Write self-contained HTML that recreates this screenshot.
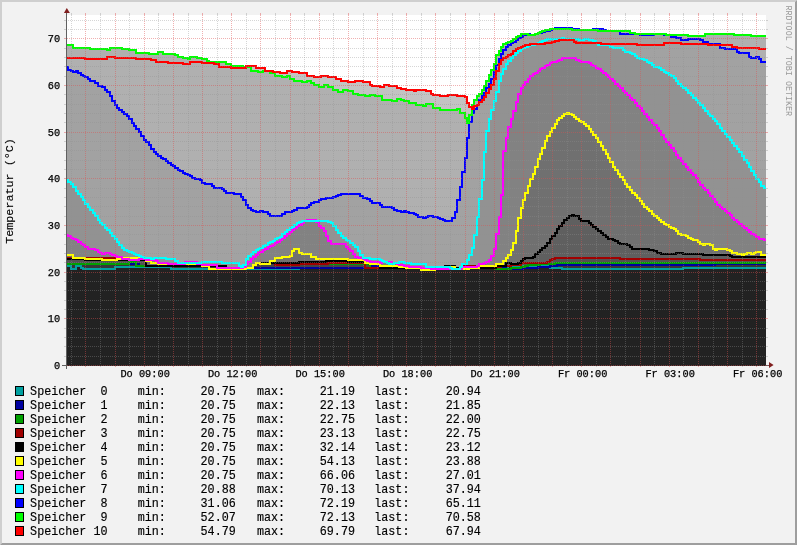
<!DOCTYPE html>
<html><head><meta charset="utf-8"><title>RRDtool graph</title><style>html,body{margin:0;padding:0;background:#F2F2F2;overflow:hidden}svg{display:block;will-change:transform}</style></head><body><svg width="797" height="545" viewBox="0 0 797 545">
<rect x="0" y="0" width="797" height="545" fill="#F2F2F2"/>
<polygon points="0,0 797,0 795,2 2,2 2,543 0,545" fill="#CFCFCF"/>
<polygon points="797,0 797,545 0,545 2,543 795,543 795,2" fill="#9E9E9E"/>
<rect x="66" y="15" width="700" height="350" fill="#FFFFFF"/>
<polygon points="66,365 66,58 85,58 85,59 107,59 107,57 115,57 115,58 136,58 136,59 151,59 151,60 156,60 156,62 168,62 168,63 183,63 183,64 190,64 190,62 202,62 202,63 214,63 214,64 219,64 219,67 231,67 231,68 246,68 246,66 256,66 256,68 265,68 265,71 273,71 273,72 280,72 280,73 287,73 287,71 292,71 292,72 299,72 299,73 307,73 307,76 314,76 314,77 321,77 321,76 328,76 328,77 336,77 336,79 341,79 341,81 348,81 348,82 355,82 355,81 363,81 363,82 370,82 370,85 372,85 372,86 380,86 380,87 384,87 384,85 389,85 389,86 397,86 397,88 401,88 401,89 406,89 406,90 414,90 414,91 416,91 416,90 426,90 426,91 431,91 431,94 433,94 433,95 440,95 440,96 448,96 448,95 457,95 457,96 465,96 465,97 467,97 467,103 469,103 469,107 472,107 472,109 474,109 474,106 477,106 477,105 479,105 479,102 482,102 482,100 484,100 484,97 486,97 486,93 489,93 489,89 491,89 491,85 494,85 494,79 496,79 496,71 499,71 499,64 501,64 501,60 503,60 503,58 506,58 506,57 508,57 508,55 511,55 511,54 513,54 513,51 516,51 516,49 518,49 518,48 521,48 521,47 523,47 523,46 525,46 525,45 530,45 530,44 545,44 545,43 552,43 552,42 555,42 555,41 559,41 559,40 574,40 574,42 576,42 576,43 601,43 601,44 637,44 637,45 664,45 664,43 681,43 681,44 708,44 708,45 732,45 732,47 737,47 737,48 759,48 759,49 766,49 766,365" fill="#C3C3C3"/>
<polygon points="66,365 66,45 73,45 73,48 90,48 90,49 107,49 107,50 110,50 110,48 122,48 122,49 129,49 129,50 136,50 136,53 149,53 149,54 158,54 158,52 163,52 163,54 175,54 175,55 178,55 178,57 183,57 183,58 188,58 188,59 190,59 190,57 197,57 197,58 202,58 202,59 207,59 207,61 209,61 209,62 217,62 217,63 219,63 219,62 226,62 226,64 231,64 231,66 243,66 243,67 251,67 251,71 258,71 258,72 263,72 263,71 270,71 270,73 275,73 275,76 282,76 282,77 287,77 287,76 290,76 290,79 294,79 294,81 302,81 302,82 307,82 307,81 311,81 311,83 314,83 314,85 319,85 319,87 324,87 324,85 328,85 328,87 333,87 333,90 338,90 338,92 343,92 343,90 348,90 348,91 353,91 353,94 358,94 358,95 365,95 365,96 370,96 370,95 375,95 375,96 382,96 382,100 392,100 392,101 397,101 397,99 401,99 401,100 404,100 404,101 409,101 409,103 416,103 416,105 423,105 423,106 426,106 426,104 433,104 433,108 440,108 440,110 457,110 457,109 460,109 460,113 465,113 465,118 467,118 467,123 469,123 469,115 472,115 472,105 474,105 474,100 477,100 477,96 479,96 479,94 482,94 482,90 484,90 484,86 486,86 486,81 489,81 489,75 491,75 491,70 494,70 494,64 496,64 496,55 499,55 499,51 501,51 501,47 503,47 503,44 506,44 506,43 508,43 508,42 511,42 511,41 513,41 513,39 516,39 516,37 518,37 518,36 521,36 521,34 528,34 528,35 535,35 535,34 538,34 538,33 540,33 540,32 542,32 542,31 545,31 545,30 550,30 550,29 572,29 572,30 598,30 598,31 630,31 630,33 635,33 635,34 666,34 666,35 688,35 688,36 705,36 705,34 734,34 734,35 751,35 751,36 766,36 766,365" fill="#B0B0B0"/>
<polygon points="66,365 66,67 68,67 68,70 71,70 71,71 73,71 73,72 76,72 76,71 78,71 78,73 81,73 81,75 83,75 83,76 85,76 85,77 88,77 88,79 90,79 90,81 95,81 95,83 98,83 98,86 102,86 102,87 105,87 105,90 107,90 107,92 110,92 110,96 112,96 112,101 115,101 115,105 117,105 117,108 119,108 119,110 122,110 122,112 124,112 124,114 127,114 127,116 129,116 129,119 132,119 132,123 134,123 134,126 136,126 136,129 139,129 139,132 141,132 141,136 144,136 144,140 146,140 146,142 149,142 149,145 151,145 151,149 154,149 154,152 156,152 156,154 158,154 158,156 161,156 161,158 163,158 163,159 166,159 166,161 168,161 168,163 171,163 171,165 173,165 173,166 175,166 175,168 178,168 178,170 180,170 180,171 183,171 183,173 185,173 185,174 188,174 188,175 190,175 190,176 192,176 192,178 195,178 195,179 200,179 200,180 202,180 202,183 205,183 205,184 212,184 212,186 214,186 214,188 222,188 222,189 224,189 224,191 226,191 226,193 234,193 234,194 241,194 241,197 243,197 243,200 246,200 246,205 248,205 248,208 251,208 251,210 253,210 253,211 256,211 256,212 260,212 260,211 263,211 263,212 268,212 268,214 270,214 270,216 282,216 282,214 285,214 285,212 292,212 292,211 294,211 294,210 297,210 297,208 307,208 307,207 309,207 309,205 311,205 311,203 314,203 314,202 319,202 319,200 321,200 321,199 326,199 326,198 333,198 333,197 336,197 336,196 338,196 338,195 341,195 341,194 360,194 360,196 363,196 363,198 367,198 367,199 370,199 370,201 372,201 372,203 380,203 380,205 382,205 382,207 392,207 392,208 394,208 394,210 397,210 397,211 401,211 401,212 404,212 404,211 406,211 406,212 409,212 409,213 414,213 414,214 416,214 416,215 418,215 418,217 423,217 423,218 426,218 426,217 428,217 428,216 433,216 433,217 438,217 438,218 440,218 440,219 443,219 443,220 445,220 445,221 452,221 452,218 455,218 455,212 457,212 457,200 460,200 460,187 462,187 462,172 465,172 465,158 467,158 467,138 469,138 469,122 472,122 472,113 474,113 474,109 477,109 477,105 479,105 479,100 482,100 482,96 484,96 484,93 486,93 486,88 489,88 489,84 491,84 491,79 494,79 494,72 496,72 496,65 499,65 499,59 501,59 501,54 503,54 503,50 506,50 506,47 508,47 508,45 511,45 511,43 513,43 513,42 516,42 516,40 518,40 518,38 521,38 521,37 523,37 523,35 528,35 528,34 530,34 530,35 535,35 535,34 538,34 538,33 542,33 542,32 545,32 545,31 550,31 550,30 552,30 552,29 555,29 555,28 572,28 572,29 579,29 579,30 593,30 593,29 603,29 603,30 606,30 606,31 620,31 620,34 640,34 640,35 654,35 654,34 664,34 664,35 671,35 671,37 676,37 676,38 681,38 681,40 688,40 688,39 700,39 700,40 703,40 703,42 708,42 708,44 720,44 720,48 725,48 725,49 737,49 737,52 739,52 739,53 749,53 749,57 751,57 751,58 756,58 756,57 759,57 759,59 761,59 761,62 766,62 766,365" fill="#A2A2A2"/>
<polygon points="66,365 66,180 68,180 68,182 71,182 71,184 73,184 73,187 76,187 76,191 78,191 78,194 81,194 81,197 83,197 83,200 85,200 85,204 88,204 88,207 90,207 90,210 93,210 93,213 95,213 95,216 98,216 98,220 100,220 100,223 102,223 102,225 105,225 105,228 107,228 107,230 110,230 110,233 112,233 112,236 115,236 115,239 117,239 117,242 119,242 119,245 122,245 122,248 124,248 124,250 127,250 127,251 129,251 129,252 132,252 132,253 134,253 134,254 136,254 136,255 139,255 139,256 141,256 141,257 144,257 144,258 151,258 151,259 154,259 154,258 166,258 166,259 175,259 175,261 178,261 178,263 202,263 202,262 222,262 222,263 239,263 239,266 241,266 241,267 243,267 243,265 246,265 246,259 248,259 248,256 251,256 251,254 253,254 253,252 256,252 256,250 258,250 258,249 260,249 260,248 263,248 263,246 265,246 265,245 268,245 268,243 270,243 270,242 273,242 273,241 275,241 275,239 277,239 277,238 280,238 280,237 282,237 282,234 285,234 285,232 287,232 287,230 290,230 290,228 292,228 292,227 294,227 294,225 297,225 297,223 299,223 299,222 302,222 302,221 328,221 328,222 331,222 331,223 333,223 333,226 336,226 336,230 338,230 338,233 341,233 341,236 343,236 343,238 346,238 346,240 348,240 348,241 350,241 350,243 353,243 353,245 355,245 355,247 358,247 358,251 360,251 360,255 363,255 363,258 370,258 370,259 380,259 380,260 382,260 382,261 384,261 384,262 387,262 387,263 389,263 389,264 394,264 394,263 399,263 399,262 404,262 404,263 411,263 411,264 426,264 426,267 450,267 450,268 452,268 452,269 460,269 460,267 462,267 462,264 467,264 467,260 469,260 469,255 472,255 472,248 474,248 474,235 477,235 477,217 479,217 479,199 482,199 482,180 484,180 484,152 486,152 486,131 489,131 489,119 491,119 491,110 494,110 494,101 496,101 496,92 499,92 499,81 501,81 501,74 503,74 503,69 506,69 506,64 508,64 508,61 511,61 511,58 513,58 513,55 516,55 516,53 518,53 518,51 521,51 521,49 523,49 523,48 525,48 525,47 528,47 528,46 530,46 530,45 535,45 535,44 538,44 538,43 540,43 540,42 542,42 542,41 545,41 545,40 547,40 547,39 562,39 562,38 564,38 564,39 579,39 579,40 584,40 584,39 589,39 589,40 593,40 593,41 596,41 596,43 598,43 598,45 610,45 610,47 613,47 613,48 623,48 623,50 625,50 625,52 630,52 630,53 632,53 632,54 635,54 635,56 637,56 637,58 640,58 640,59 644,59 644,60 647,60 647,62 649,62 649,63 652,63 652,65 654,65 654,67 659,67 659,68 661,68 661,70 664,70 664,72 666,72 666,73 669,73 669,75 671,75 671,76 674,76 674,78 676,78 676,81 678,81 678,84 681,84 681,86 683,86 683,88 686,88 686,90 688,90 688,93 691,93 691,95 693,95 693,98 696,98 696,100 698,100 698,103 700,103 700,105 703,105 703,108 705,108 705,111 708,111 708,114 710,114 710,116 713,116 713,119 715,119 715,121 717,121 717,124 720,124 720,128 722,128 722,131 725,131 725,134 727,134 727,137 730,137 730,140 732,140 732,143 734,143 734,146 737,146 737,149 739,149 739,152 742,152 742,156 744,156 744,160 747,160 747,163 749,163 749,167 751,167 751,171 754,171 754,175 756,175 756,179 759,179 759,182 761,182 761,186 764,186 764,188 766,188 766,365" fill="#929292"/>
<polygon points="66,365 66,235 68,235 68,236 71,236 71,238 73,238 73,239 76,239 76,240 78,240 78,242 81,242 81,244 83,244 83,245 85,245 85,247 88,247 88,249 95,249 95,250 98,250 98,252 100,252 100,253 102,253 102,254 105,254 105,253 110,253 110,254 112,254 112,255 115,255 115,256 117,256 117,257 122,257 122,259 129,259 129,260 139,260 139,259 146,259 146,260 156,260 156,261 158,261 158,263 168,263 168,264 185,264 185,262 197,262 197,264 202,264 202,265 217,265 217,268 243,268 243,267 246,267 246,264 248,264 248,262 251,262 251,259 253,259 253,257 256,257 256,255 258,255 258,253 260,253 260,252 263,252 263,250 265,250 265,249 268,249 268,247 270,247 270,246 273,246 273,245 275,245 275,243 277,243 277,242 280,242 280,240 282,240 282,238 285,238 285,236 287,236 287,234 290,234 290,232 292,232 292,230 294,230 294,228 297,228 297,226 299,226 299,225 302,225 302,223 304,223 304,221 307,221 307,220 316,220 316,222 319,222 319,226 321,226 321,228 324,228 324,231 326,231 326,236 328,236 328,241 331,241 331,244 346,244 346,247 348,247 348,249 350,249 350,251 353,251 353,254 355,254 355,257 358,257 358,258 363,258 363,259 365,259 365,260 367,260 367,261 370,261 370,262 380,262 380,263 382,263 382,262 392,262 392,263 397,263 397,264 399,264 399,265 404,265 404,266 409,266 409,267 421,267 421,268 431,268 431,269 462,269 462,267 477,267 477,266 479,266 479,264 484,264 484,263 486,263 486,262 489,262 489,260 491,260 491,256 494,256 494,249 496,249 496,234 499,234 499,217 501,217 501,195 503,195 503,151 506,151 506,138 508,138 508,127 511,127 511,119 513,119 513,111 516,111 516,102 518,102 518,94 521,94 521,88 523,88 523,85 525,85 525,82 528,82 528,79 530,79 530,76 533,76 533,74 535,74 535,73 538,73 538,71 540,71 540,69 542,69 542,68 545,68 545,66 547,66 547,65 550,65 550,63 552,63 552,62 557,62 557,61 559,61 559,60 562,60 562,58 576,58 576,60 579,60 579,61 581,61 581,62 589,62 589,63 591,63 591,65 593,65 593,66 596,66 596,68 598,68 598,69 601,69 601,71 603,71 603,73 606,73 606,75 608,75 608,77 610,77 610,79 613,79 613,81 615,81 615,84 618,84 618,86 620,86 620,88 623,88 623,91 625,91 625,93 627,93 627,95 630,95 630,98 632,98 632,100 635,100 635,103 637,103 637,106 640,106 640,108 642,108 642,111 644,111 644,114 647,114 647,117 649,117 649,120 652,120 652,123 654,123 654,125 657,125 657,128 659,128 659,131 661,131 661,135 664,135 664,139 666,139 666,142 669,142 669,145 671,145 671,148 674,148 674,151 676,151 676,155 678,155 678,158 681,158 681,161 683,161 683,164 686,164 686,167 688,167 688,170 691,170 691,173 693,173 693,175 696,175 696,178 698,178 698,182 700,182 700,185 703,185 703,188 705,188 705,190 708,190 708,193 710,193 710,196 713,196 713,199 715,199 715,202 717,202 717,205 720,205 720,207 722,207 722,209 725,209 725,211 727,211 727,213 730,213 730,215 732,215 732,218 734,218 734,220 737,220 737,222 739,222 739,224 742,224 742,226 744,226 744,228 747,228 747,230 749,230 749,232 751,232 751,234 754,234 754,235 756,235 756,237 759,237 759,239 764,239 764,240 766,240 766,365" fill="#828282"/>
<polygon points="66,365 66,255 73,255 73,258 85,258 85,259 102,259 102,260 117,260 117,259 122,259 122,258 139,258 139,259 146,259 146,261 151,261 151,263 158,263 158,264 202,264 202,266 209,266 209,269 246,269 246,268 253,268 253,265 256,265 256,263 260,263 260,264 270,264 270,261 275,261 275,258 282,258 282,257 290,257 290,256 292,256 292,251 294,251 294,249 299,249 299,253 302,253 302,254 311,254 311,257 316,257 316,259 348,259 348,260 365,260 365,263 370,263 370,264 380,264 380,266 399,266 399,267 406,267 406,268 421,268 421,270 435,270 435,269 438,269 438,267 455,267 455,269 469,269 469,268 479,268 479,266 496,266 496,264 503,264 503,261 506,261 506,258 508,258 508,255 511,255 511,250 513,250 513,243 516,243 516,231 518,231 518,218 521,218 521,208 523,208 523,200 525,200 525,193 528,193 528,186 530,186 530,179 533,179 533,174 535,174 535,167 538,167 538,159 540,159 540,154 542,154 542,148 545,148 545,141 547,141 547,136 550,136 550,132 552,132 552,128 555,128 555,124 557,124 557,120 559,120 559,118 562,118 562,116 564,116 564,114 567,114 567,113 569,113 569,114 572,114 572,115 574,115 574,117 576,117 576,119 579,119 579,121 581,121 581,122 584,122 584,124 586,124 586,126 589,126 589,129 591,129 591,132 593,132 593,135 596,135 596,138 598,138 598,142 601,142 601,146 603,146 603,150 606,150 606,154 608,154 608,158 610,158 610,162 613,162 613,167 615,167 615,170 618,170 618,174 620,174 620,177 623,177 623,180 625,180 625,184 627,184 627,187 630,187 630,190 632,190 632,193 635,193 635,195 637,195 637,198 640,198 640,201 642,201 642,204 644,204 644,207 647,207 647,209 649,209 649,211 652,211 652,214 654,214 654,216 657,216 657,218 659,218 659,220 661,220 661,222 664,222 664,224 666,224 666,225 669,225 669,227 671,227 671,228 674,228 674,229 676,229 676,231 678,231 678,234 681,234 681,235 686,235 686,236 688,236 688,238 691,238 691,239 693,239 693,240 698,240 698,242 700,242 700,244 703,244 703,245 705,245 705,244 710,244 710,245 713,245 713,249 715,249 715,250 717,250 717,249 727,249 727,250 730,250 730,251 732,251 732,253 737,253 737,254 742,254 742,255 744,255 744,254 747,254 747,253 751,253 751,254 754,254 754,253 756,253 756,252 761,252 761,255 766,255 766,365" fill="#707070"/>
<polygon points="66,365 66,259 85,259 85,260 146,260 146,266 226,266 226,269 246,269 246,268 253,268 253,265 256,265 256,263 299,263 299,262 326,262 326,261 348,261 348,262 380,262 380,268 445,268 445,266 455,266 455,268 496,268 496,266 506,266 506,263 511,263 511,264 518,264 518,263 521,263 521,261 523,261 523,259 525,259 525,258 533,258 533,257 535,257 535,254 538,254 538,252 540,252 540,250 542,250 542,248 545,248 545,246 547,246 547,243 550,243 550,239 552,239 552,236 555,236 555,233 557,233 557,229 559,229 559,226 562,226 562,223 564,223 564,220 567,220 567,218 569,218 569,216 572,216 572,215 574,215 574,216 579,216 579,219 581,219 581,221 589,221 589,223 591,223 591,225 593,225 593,227 596,227 596,229 598,229 598,231 601,231 601,233 603,233 603,235 606,235 606,237 608,237 608,239 613,239 613,240 615,240 615,241 618,241 618,243 620,243 620,244 627,244 627,245 630,245 630,247 632,247 632,249 649,249 649,250 654,250 654,251 657,251 657,253 661,253 661,254 676,254 676,253 683,253 683,254 703,254 703,255 730,255 730,256 732,256 732,257 766,257 766,365" fill="#5F5F5F"/>
<polygon points="66,365 66,258 146,258 146,266 226,266 226,269 246,269 246,268 253,268 253,265 256,265 256,263 275,263 275,265 299,265 299,264 328,264 328,263 365,263 365,268 462,268 462,266 479,266 479,268 489,268 489,267 501,267 501,266 511,266 511,265 521,265 521,263 547,263 547,262 550,262 550,260 552,260 552,259 555,259 555,258 620,258 620,259 700,259 700,260 766,260 766,365" fill="#525252"/>
<polygon points="66,365 66,264 129,264 129,262 136,262 136,266 226,266 226,269 246,269 246,268 253,268 253,265 256,265 256,263 299,263 299,264 370,264 370,268 496,268 496,269 511,269 511,268 521,268 521,267 525,267 525,266 528,266 528,265 540,265 540,264 555,264 555,263 766,263 766,365" fill="#444444"/>
<polygon points="66,365 66,264 139,264 139,266 226,266 226,268 370,268 370,267 372,267 372,266 380,266 380,268 506,268 506,269 523,269 523,268 538,268 538,267 550,267 550,266 557,266 557,265 715,265 715,264 766,264 766,365" fill="#363636"/>
<polygon points="66,365 66,266 71,266 71,269 76,269 76,266 81,266 81,268 83,268 83,269 115,269 115,267 171,267 171,269 299,269 299,268 501,268 501,269 508,269 508,266 550,266 550,268 562,268 562,269 683,269 683,268 766,268 766,365" fill="#222222"/>
<polyline points="66,266 71,266 71,269 76,269 76,266 81,266 81,268 83,268 83,269 115,269 115,267 171,267 171,269 299,269 299,268 501,268 501,269 508,269 508,266 550,266 550,268 562,268 562,269 683,269 683,268 766,268" fill="none" stroke="#00A0A0" stroke-width="2" stroke-linejoin="miter" stroke-miterlimit="4" shape-rendering="crispEdges"/>
<polyline points="66,264 139,264 139,266 226,266 226,268 370,268 370,267 372,267 372,266 380,266 380,268 506,268 506,269 523,269 523,268 538,268 538,267 550,267 550,266 557,266 557,265 715,265 715,264 766,264" fill="none" stroke="#0000A0" stroke-width="2" stroke-linejoin="miter" stroke-miterlimit="4" shape-rendering="crispEdges"/>
<polyline points="66,264 129,264 129,262 136,262 136,266 226,266 226,269 246,269 246,268 253,268 253,265 256,265 256,263 299,263 299,264 370,264 370,268 496,268 496,269 511,269 511,268 521,268 521,267 525,267 525,266 528,266 528,265 540,265 540,264 555,264 555,263 766,263" fill="none" stroke="#00A000" stroke-width="2" stroke-linejoin="miter" stroke-miterlimit="4" shape-rendering="crispEdges"/>
<polyline points="66,258 146,258 146,266 226,266 226,269 246,269 246,268 253,268 253,265 256,265 256,263 275,263 275,265 299,265 299,264 328,264 328,263 365,263 365,268 462,268 462,266 479,266 479,268 489,268 489,267 501,267 501,266 511,266 511,265 521,265 521,263 547,263 547,262 550,262 550,260 552,260 552,259 555,259 555,258 620,258 620,259 700,259 700,260 766,260" fill="none" stroke="#A00000" stroke-width="2" stroke-linejoin="miter" stroke-miterlimit="4" shape-rendering="crispEdges"/>
<polyline points="66,259 85,259 85,260 146,260 146,266 226,266 226,269 246,269 246,268 253,268 253,265 256,265 256,263 299,263 299,262 326,262 326,261 348,261 348,262 380,262 380,268 445,268 445,266 455,266 455,268 496,268 496,266 506,266 506,263 511,263 511,264 518,264 518,263 521,263 521,261 523,261 523,259 525,259 525,258 533,258 533,257 535,257 535,254 538,254 538,252 540,252 540,250 542,250 542,248 545,248 545,246 547,246 547,243 550,243 550,239 552,239 552,236 555,236 555,233 557,233 557,229 559,229 559,226 562,226 562,223 564,223 564,220 567,220 567,218 569,218 569,216 572,216 572,215 574,215 574,216 579,216 579,219 581,219 581,221 589,221 589,223 591,223 591,225 593,225 593,227 596,227 596,229 598,229 598,231 601,231 601,233 603,233 603,235 606,235 606,237 608,237 608,239 613,239 613,240 615,240 615,241 618,241 618,243 620,243 620,244 627,244 627,245 630,245 630,247 632,247 632,249 649,249 649,250 654,250 654,251 657,251 657,253 661,253 661,254 676,254 676,253 683,253 683,254 703,254 703,255 730,255 730,256 732,256 732,257 766,257" fill="none" stroke="#000000" stroke-width="2" stroke-linejoin="miter" stroke-miterlimit="4" shape-rendering="crispEdges"/>
<polyline points="66,255 73,255 73,258 85,258 85,259 102,259 102,260 117,260 117,259 122,259 122,258 139,258 139,259 146,259 146,261 151,261 151,263 158,263 158,264 202,264 202,266 209,266 209,269 246,269 246,268 253,268 253,265 256,265 256,263 260,263 260,264 270,264 270,261 275,261 275,258 282,258 282,257 290,257 290,256 292,256 292,251 294,251 294,249 299,249 299,253 302,253 302,254 311,254 311,257 316,257 316,259 348,259 348,260 365,260 365,263 370,263 370,264 380,264 380,266 399,266 399,267 406,267 406,268 421,268 421,270 435,270 435,269 438,269 438,267 455,267 455,269 469,269 469,268 479,268 479,266 496,266 496,264 503,264 503,261 506,261 506,258 508,258 508,255 511,255 511,250 513,250 513,243 516,243 516,231 518,231 518,218 521,218 521,208 523,208 523,200 525,200 525,193 528,193 528,186 530,186 530,179 533,179 533,174 535,174 535,167 538,167 538,159 540,159 540,154 542,154 542,148 545,148 545,141 547,141 547,136 550,136 550,132 552,132 552,128 555,128 555,124 557,124 557,120 559,120 559,118 562,118 562,116 564,116 564,114 567,114 567,113 569,113 569,114 572,114 572,115 574,115 574,117 576,117 576,119 579,119 579,121 581,121 581,122 584,122 584,124 586,124 586,126 589,126 589,129 591,129 591,132 593,132 593,135 596,135 596,138 598,138 598,142 601,142 601,146 603,146 603,150 606,150 606,154 608,154 608,158 610,158 610,162 613,162 613,167 615,167 615,170 618,170 618,174 620,174 620,177 623,177 623,180 625,180 625,184 627,184 627,187 630,187 630,190 632,190 632,193 635,193 635,195 637,195 637,198 640,198 640,201 642,201 642,204 644,204 644,207 647,207 647,209 649,209 649,211 652,211 652,214 654,214 654,216 657,216 657,218 659,218 659,220 661,220 661,222 664,222 664,224 666,224 666,225 669,225 669,227 671,227 671,228 674,228 674,229 676,229 676,231 678,231 678,234 681,234 681,235 686,235 686,236 688,236 688,238 691,238 691,239 693,239 693,240 698,240 698,242 700,242 700,244 703,244 703,245 705,245 705,244 710,244 710,245 713,245 713,249 715,249 715,250 717,250 717,249 727,249 727,250 730,250 730,251 732,251 732,253 737,253 737,254 742,254 742,255 744,255 744,254 747,254 747,253 751,253 751,254 754,254 754,253 756,253 756,252 761,252 761,255 766,255" fill="none" stroke="#FFFF00" stroke-width="2" stroke-linejoin="miter" stroke-miterlimit="4" shape-rendering="crispEdges"/>
<polyline points="66,235 68,235 68,236 71,236 71,238 73,238 73,239 76,239 76,240 78,240 78,242 81,242 81,244 83,244 83,245 85,245 85,247 88,247 88,249 95,249 95,250 98,250 98,252 100,252 100,253 102,253 102,254 105,254 105,253 110,253 110,254 112,254 112,255 115,255 115,256 117,256 117,257 122,257 122,259 129,259 129,260 139,260 139,259 146,259 146,260 156,260 156,261 158,261 158,263 168,263 168,264 185,264 185,262 197,262 197,264 202,264 202,265 217,265 217,268 243,268 243,267 246,267 246,264 248,264 248,262 251,262 251,259 253,259 253,257 256,257 256,255 258,255 258,253 260,253 260,252 263,252 263,250 265,250 265,249 268,249 268,247 270,247 270,246 273,246 273,245 275,245 275,243 277,243 277,242 280,242 280,240 282,240 282,238 285,238 285,236 287,236 287,234 290,234 290,232 292,232 292,230 294,230 294,228 297,228 297,226 299,226 299,225 302,225 302,223 304,223 304,221 307,221 307,220 316,220 316,222 319,222 319,226 321,226 321,228 324,228 324,231 326,231 326,236 328,236 328,241 331,241 331,244 346,244 346,247 348,247 348,249 350,249 350,251 353,251 353,254 355,254 355,257 358,257 358,258 363,258 363,259 365,259 365,260 367,260 367,261 370,261 370,262 380,262 380,263 382,263 382,262 392,262 392,263 397,263 397,264 399,264 399,265 404,265 404,266 409,266 409,267 421,267 421,268 431,268 431,269 462,269 462,267 477,267 477,266 479,266 479,264 484,264 484,263 486,263 486,262 489,262 489,260 491,260 491,256 494,256 494,249 496,249 496,234 499,234 499,217 501,217 501,195 503,195 503,151 506,151 506,138 508,138 508,127 511,127 511,119 513,119 513,111 516,111 516,102 518,102 518,94 521,94 521,88 523,88 523,85 525,85 525,82 528,82 528,79 530,79 530,76 533,76 533,74 535,74 535,73 538,73 538,71 540,71 540,69 542,69 542,68 545,68 545,66 547,66 547,65 550,65 550,63 552,63 552,62 557,62 557,61 559,61 559,60 562,60 562,58 576,58 576,60 579,60 579,61 581,61 581,62 589,62 589,63 591,63 591,65 593,65 593,66 596,66 596,68 598,68 598,69 601,69 601,71 603,71 603,73 606,73 606,75 608,75 608,77 610,77 610,79 613,79 613,81 615,81 615,84 618,84 618,86 620,86 620,88 623,88 623,91 625,91 625,93 627,93 627,95 630,95 630,98 632,98 632,100 635,100 635,103 637,103 637,106 640,106 640,108 642,108 642,111 644,111 644,114 647,114 647,117 649,117 649,120 652,120 652,123 654,123 654,125 657,125 657,128 659,128 659,131 661,131 661,135 664,135 664,139 666,139 666,142 669,142 669,145 671,145 671,148 674,148 674,151 676,151 676,155 678,155 678,158 681,158 681,161 683,161 683,164 686,164 686,167 688,167 688,170 691,170 691,173 693,173 693,175 696,175 696,178 698,178 698,182 700,182 700,185 703,185 703,188 705,188 705,190 708,190 708,193 710,193 710,196 713,196 713,199 715,199 715,202 717,202 717,205 720,205 720,207 722,207 722,209 725,209 725,211 727,211 727,213 730,213 730,215 732,215 732,218 734,218 734,220 737,220 737,222 739,222 739,224 742,224 742,226 744,226 744,228 747,228 747,230 749,230 749,232 751,232 751,234 754,234 754,235 756,235 756,237 759,237 759,239 764,239 764,240 766,240" fill="none" stroke="#FF00FF" stroke-width="2" stroke-linejoin="miter" stroke-miterlimit="4" shape-rendering="crispEdges"/>
<polyline points="66,180 68,180 68,182 71,182 71,184 73,184 73,187 76,187 76,191 78,191 78,194 81,194 81,197 83,197 83,200 85,200 85,204 88,204 88,207 90,207 90,210 93,210 93,213 95,213 95,216 98,216 98,220 100,220 100,223 102,223 102,225 105,225 105,228 107,228 107,230 110,230 110,233 112,233 112,236 115,236 115,239 117,239 117,242 119,242 119,245 122,245 122,248 124,248 124,250 127,250 127,251 129,251 129,252 132,252 132,253 134,253 134,254 136,254 136,255 139,255 139,256 141,256 141,257 144,257 144,258 151,258 151,259 154,259 154,258 166,258 166,259 175,259 175,261 178,261 178,263 202,263 202,262 222,262 222,263 239,263 239,266 241,266 241,267 243,267 243,265 246,265 246,259 248,259 248,256 251,256 251,254 253,254 253,252 256,252 256,250 258,250 258,249 260,249 260,248 263,248 263,246 265,246 265,245 268,245 268,243 270,243 270,242 273,242 273,241 275,241 275,239 277,239 277,238 280,238 280,237 282,237 282,234 285,234 285,232 287,232 287,230 290,230 290,228 292,228 292,227 294,227 294,225 297,225 297,223 299,223 299,222 302,222 302,221 328,221 328,222 331,222 331,223 333,223 333,226 336,226 336,230 338,230 338,233 341,233 341,236 343,236 343,238 346,238 346,240 348,240 348,241 350,241 350,243 353,243 353,245 355,245 355,247 358,247 358,251 360,251 360,255 363,255 363,258 370,258 370,259 380,259 380,260 382,260 382,261 384,261 384,262 387,262 387,263 389,263 389,264 394,264 394,263 399,263 399,262 404,262 404,263 411,263 411,264 426,264 426,267 450,267 450,268 452,268 452,269 460,269 460,267 462,267 462,264 467,264 467,260 469,260 469,255 472,255 472,248 474,248 474,235 477,235 477,217 479,217 479,199 482,199 482,180 484,180 484,152 486,152 486,131 489,131 489,119 491,119 491,110 494,110 494,101 496,101 496,92 499,92 499,81 501,81 501,74 503,74 503,69 506,69 506,64 508,64 508,61 511,61 511,58 513,58 513,55 516,55 516,53 518,53 518,51 521,51 521,49 523,49 523,48 525,48 525,47 528,47 528,46 530,46 530,45 535,45 535,44 538,44 538,43 540,43 540,42 542,42 542,41 545,41 545,40 547,40 547,39 562,39 562,38 564,38 564,39 579,39 579,40 584,40 584,39 589,39 589,40 593,40 593,41 596,41 596,43 598,43 598,45 610,45 610,47 613,47 613,48 623,48 623,50 625,50 625,52 630,52 630,53 632,53 632,54 635,54 635,56 637,56 637,58 640,58 640,59 644,59 644,60 647,60 647,62 649,62 649,63 652,63 652,65 654,65 654,67 659,67 659,68 661,68 661,70 664,70 664,72 666,72 666,73 669,73 669,75 671,75 671,76 674,76 674,78 676,78 676,81 678,81 678,84 681,84 681,86 683,86 683,88 686,88 686,90 688,90 688,93 691,93 691,95 693,95 693,98 696,98 696,100 698,100 698,103 700,103 700,105 703,105 703,108 705,108 705,111 708,111 708,114 710,114 710,116 713,116 713,119 715,119 715,121 717,121 717,124 720,124 720,128 722,128 722,131 725,131 725,134 727,134 727,137 730,137 730,140 732,140 732,143 734,143 734,146 737,146 737,149 739,149 739,152 742,152 742,156 744,156 744,160 747,160 747,163 749,163 749,167 751,167 751,171 754,171 754,175 756,175 756,179 759,179 759,182 761,182 761,186 764,186 764,188 766,188" fill="none" stroke="#00FFFF" stroke-width="2" stroke-linejoin="miter" stroke-miterlimit="4" shape-rendering="crispEdges"/>
<polyline points="66,67 68,67 68,70 71,70 71,71 73,71 73,72 76,72 76,71 78,71 78,73 81,73 81,75 83,75 83,76 85,76 85,77 88,77 88,79 90,79 90,81 95,81 95,83 98,83 98,86 102,86 102,87 105,87 105,90 107,90 107,92 110,92 110,96 112,96 112,101 115,101 115,105 117,105 117,108 119,108 119,110 122,110 122,112 124,112 124,114 127,114 127,116 129,116 129,119 132,119 132,123 134,123 134,126 136,126 136,129 139,129 139,132 141,132 141,136 144,136 144,140 146,140 146,142 149,142 149,145 151,145 151,149 154,149 154,152 156,152 156,154 158,154 158,156 161,156 161,158 163,158 163,159 166,159 166,161 168,161 168,163 171,163 171,165 173,165 173,166 175,166 175,168 178,168 178,170 180,170 180,171 183,171 183,173 185,173 185,174 188,174 188,175 190,175 190,176 192,176 192,178 195,178 195,179 200,179 200,180 202,180 202,183 205,183 205,184 212,184 212,186 214,186 214,188 222,188 222,189 224,189 224,191 226,191 226,193 234,193 234,194 241,194 241,197 243,197 243,200 246,200 246,205 248,205 248,208 251,208 251,210 253,210 253,211 256,211 256,212 260,212 260,211 263,211 263,212 268,212 268,214 270,214 270,216 282,216 282,214 285,214 285,212 292,212 292,211 294,211 294,210 297,210 297,208 307,208 307,207 309,207 309,205 311,205 311,203 314,203 314,202 319,202 319,200 321,200 321,199 326,199 326,198 333,198 333,197 336,197 336,196 338,196 338,195 341,195 341,194 360,194 360,196 363,196 363,198 367,198 367,199 370,199 370,201 372,201 372,203 380,203 380,205 382,205 382,207 392,207 392,208 394,208 394,210 397,210 397,211 401,211 401,212 404,212 404,211 406,211 406,212 409,212 409,213 414,213 414,214 416,214 416,215 418,215 418,217 423,217 423,218 426,218 426,217 428,217 428,216 433,216 433,217 438,217 438,218 440,218 440,219 443,219 443,220 445,220 445,221 452,221 452,218 455,218 455,212 457,212 457,200 460,200 460,187 462,187 462,172 465,172 465,158 467,158 467,138 469,138 469,122 472,122 472,113 474,113 474,109 477,109 477,105 479,105 479,100 482,100 482,96 484,96 484,93 486,93 486,88 489,88 489,84 491,84 491,79 494,79 494,72 496,72 496,65 499,65 499,59 501,59 501,54 503,54 503,50 506,50 506,47 508,47 508,45 511,45 511,43 513,43 513,42 516,42 516,40 518,40 518,38 521,38 521,37 523,37 523,35 528,35 528,34 530,34 530,35 535,35 535,34 538,34 538,33 542,33 542,32 545,32 545,31 550,31 550,30 552,30 552,29 555,29 555,28 572,28 572,29 579,29 579,30 593,30 593,29 603,29 603,30 606,30 606,31 620,31 620,34 640,34 640,35 654,35 654,34 664,34 664,35 671,35 671,37 676,37 676,38 681,38 681,40 688,40 688,39 700,39 700,40 703,40 703,42 708,42 708,44 720,44 720,48 725,48 725,49 737,49 737,52 739,52 739,53 749,53 749,57 751,57 751,58 756,58 756,57 759,57 759,59 761,59 761,62 766,62" fill="none" stroke="#0000FF" stroke-width="2" stroke-linejoin="miter" stroke-miterlimit="4" shape-rendering="crispEdges"/>
<polyline points="66,45 73,45 73,48 90,48 90,49 107,49 107,50 110,50 110,48 122,48 122,49 129,49 129,50 136,50 136,53 149,53 149,54 158,54 158,52 163,52 163,54 175,54 175,55 178,55 178,57 183,57 183,58 188,58 188,59 190,59 190,57 197,57 197,58 202,58 202,59 207,59 207,61 209,61 209,62 217,62 217,63 219,63 219,62 226,62 226,64 231,64 231,66 243,66 243,67 251,67 251,71 258,71 258,72 263,72 263,71 270,71 270,73 275,73 275,76 282,76 282,77 287,77 287,76 290,76 290,79 294,79 294,81 302,81 302,82 307,82 307,81 311,81 311,83 314,83 314,85 319,85 319,87 324,87 324,85 328,85 328,87 333,87 333,90 338,90 338,92 343,92 343,90 348,90 348,91 353,91 353,94 358,94 358,95 365,95 365,96 370,96 370,95 375,95 375,96 382,96 382,100 392,100 392,101 397,101 397,99 401,99 401,100 404,100 404,101 409,101 409,103 416,103 416,105 423,105 423,106 426,106 426,104 433,104 433,108 440,108 440,110 457,110 457,109 460,109 460,113 465,113 465,118 467,118 467,123 469,123 469,115 472,115 472,105 474,105 474,100 477,100 477,96 479,96 479,94 482,94 482,90 484,90 484,86 486,86 486,81 489,81 489,75 491,75 491,70 494,70 494,64 496,64 496,55 499,55 499,51 501,51 501,47 503,47 503,44 506,44 506,43 508,43 508,42 511,42 511,41 513,41 513,39 516,39 516,37 518,37 518,36 521,36 521,34 528,34 528,35 535,35 535,34 538,34 538,33 540,33 540,32 542,32 542,31 545,31 545,30 550,30 550,29 572,29 572,30 598,30 598,31 630,31 630,33 635,33 635,34 666,34 666,35 688,35 688,36 705,36 705,34 734,34 734,35 751,35 751,36 766,36" fill="none" stroke="#00FF00" stroke-width="2" stroke-linejoin="miter" stroke-miterlimit="4" shape-rendering="crispEdges"/>
<polyline points="66,58 85,58 85,59 107,59 107,57 115,57 115,58 136,58 136,59 151,59 151,60 156,60 156,62 168,62 168,63 183,63 183,64 190,64 190,62 202,62 202,63 214,63 214,64 219,64 219,67 231,67 231,68 246,68 246,66 256,66 256,68 265,68 265,71 273,71 273,72 280,72 280,73 287,73 287,71 292,71 292,72 299,72 299,73 307,73 307,76 314,76 314,77 321,77 321,76 328,76 328,77 336,77 336,79 341,79 341,81 348,81 348,82 355,82 355,81 363,81 363,82 370,82 370,85 372,85 372,86 380,86 380,87 384,87 384,85 389,85 389,86 397,86 397,88 401,88 401,89 406,89 406,90 414,90 414,91 416,91 416,90 426,90 426,91 431,91 431,94 433,94 433,95 440,95 440,96 448,96 448,95 457,95 457,96 465,96 465,97 467,97 467,103 469,103 469,107 472,107 472,109 474,109 474,106 477,106 477,105 479,105 479,102 482,102 482,100 484,100 484,97 486,97 486,93 489,93 489,89 491,89 491,85 494,85 494,79 496,79 496,71 499,71 499,64 501,64 501,60 503,60 503,58 506,58 506,57 508,57 508,55 511,55 511,54 513,54 513,51 516,51 516,49 518,49 518,48 521,48 521,47 523,47 523,46 525,46 525,45 530,45 530,44 545,44 545,43 552,43 552,42 555,42 555,41 559,41 559,40 574,40 574,42 576,42 576,43 601,43 601,44 637,44 637,45 664,45 664,43 681,43 681,44 708,44 708,45 732,45 732,47 737,47 737,48 759,48 759,49 766,49" fill="none" stroke="#FF0000" stroke-width="2" stroke-linejoin="miter" stroke-miterlimit="4" shape-rendering="crispEdges"/>
<g shape-rendering="crispEdges"><line x1="64" y1="356.5" x2="66" y2="356.5" stroke="#8F8F8F" stroke-opacity="0.37"/><line x1="766" y1="356.5" x2="768" y2="356.5" stroke="#8F8F8F" stroke-opacity="0.37"/><line x1="66" y1="356.5" x2="766" y2="356.5" stroke="#8F8F8F" stroke-opacity="0.37" stroke-dasharray="1 1"/><line x1="64" y1="346.5" x2="66" y2="346.5" stroke="#8F8F8F" stroke-opacity="0.37"/><line x1="766" y1="346.5" x2="768" y2="346.5" stroke="#8F8F8F" stroke-opacity="0.37"/><line x1="66" y1="346.5" x2="766" y2="346.5" stroke="#8F8F8F" stroke-opacity="0.37" stroke-dasharray="1 1"/><line x1="64" y1="337.5" x2="66" y2="337.5" stroke="#8F8F8F" stroke-opacity="0.37"/><line x1="766" y1="337.5" x2="768" y2="337.5" stroke="#8F8F8F" stroke-opacity="0.37"/><line x1="66" y1="337.5" x2="766" y2="337.5" stroke="#8F8F8F" stroke-opacity="0.37" stroke-dasharray="1 1"/><line x1="64" y1="328.5" x2="66" y2="328.5" stroke="#8F8F8F" stroke-opacity="0.37"/><line x1="766" y1="328.5" x2="768" y2="328.5" stroke="#8F8F8F" stroke-opacity="0.37"/><line x1="66" y1="328.5" x2="766" y2="328.5" stroke="#8F8F8F" stroke-opacity="0.37" stroke-dasharray="1 1"/><line x1="64" y1="309.5" x2="66" y2="309.5" stroke="#8F8F8F" stroke-opacity="0.37"/><line x1="766" y1="309.5" x2="768" y2="309.5" stroke="#8F8F8F" stroke-opacity="0.37"/><line x1="66" y1="309.5" x2="766" y2="309.5" stroke="#8F8F8F" stroke-opacity="0.37" stroke-dasharray="1 1"/><line x1="64" y1="300.5" x2="66" y2="300.5" stroke="#8F8F8F" stroke-opacity="0.37"/><line x1="766" y1="300.5" x2="768" y2="300.5" stroke="#8F8F8F" stroke-opacity="0.37"/><line x1="66" y1="300.5" x2="766" y2="300.5" stroke="#8F8F8F" stroke-opacity="0.37" stroke-dasharray="1 1"/><line x1="64" y1="290.5" x2="66" y2="290.5" stroke="#8F8F8F" stroke-opacity="0.37"/><line x1="766" y1="290.5" x2="768" y2="290.5" stroke="#8F8F8F" stroke-opacity="0.37"/><line x1="66" y1="290.5" x2="766" y2="290.5" stroke="#8F8F8F" stroke-opacity="0.37" stroke-dasharray="1 1"/><line x1="64" y1="281.5" x2="66" y2="281.5" stroke="#8F8F8F" stroke-opacity="0.37"/><line x1="766" y1="281.5" x2="768" y2="281.5" stroke="#8F8F8F" stroke-opacity="0.37"/><line x1="66" y1="281.5" x2="766" y2="281.5" stroke="#8F8F8F" stroke-opacity="0.37" stroke-dasharray="1 1"/><line x1="64" y1="262.5" x2="66" y2="262.5" stroke="#8F8F8F" stroke-opacity="0.37"/><line x1="766" y1="262.5" x2="768" y2="262.5" stroke="#8F8F8F" stroke-opacity="0.37"/><line x1="66" y1="262.5" x2="766" y2="262.5" stroke="#8F8F8F" stroke-opacity="0.37" stroke-dasharray="1 1"/><line x1="64" y1="253.5" x2="66" y2="253.5" stroke="#8F8F8F" stroke-opacity="0.37"/><line x1="766" y1="253.5" x2="768" y2="253.5" stroke="#8F8F8F" stroke-opacity="0.37"/><line x1="66" y1="253.5" x2="766" y2="253.5" stroke="#8F8F8F" stroke-opacity="0.37" stroke-dasharray="1 1"/><line x1="64" y1="244.5" x2="66" y2="244.5" stroke="#8F8F8F" stroke-opacity="0.37"/><line x1="766" y1="244.5" x2="768" y2="244.5" stroke="#8F8F8F" stroke-opacity="0.37"/><line x1="66" y1="244.5" x2="766" y2="244.5" stroke="#8F8F8F" stroke-opacity="0.37" stroke-dasharray="1 1"/><line x1="64" y1="234.5" x2="66" y2="234.5" stroke="#8F8F8F" stroke-opacity="0.37"/><line x1="766" y1="234.5" x2="768" y2="234.5" stroke="#8F8F8F" stroke-opacity="0.37"/><line x1="66" y1="234.5" x2="766" y2="234.5" stroke="#8F8F8F" stroke-opacity="0.37" stroke-dasharray="1 1"/><line x1="64" y1="216.5" x2="66" y2="216.5" stroke="#8F8F8F" stroke-opacity="0.37"/><line x1="766" y1="216.5" x2="768" y2="216.5" stroke="#8F8F8F" stroke-opacity="0.37"/><line x1="66" y1="216.5" x2="766" y2="216.5" stroke="#8F8F8F" stroke-opacity="0.37" stroke-dasharray="1 1"/><line x1="64" y1="206.5" x2="66" y2="206.5" stroke="#8F8F8F" stroke-opacity="0.37"/><line x1="766" y1="206.5" x2="768" y2="206.5" stroke="#8F8F8F" stroke-opacity="0.37"/><line x1="66" y1="206.5" x2="766" y2="206.5" stroke="#8F8F8F" stroke-opacity="0.37" stroke-dasharray="1 1"/><line x1="64" y1="197.5" x2="66" y2="197.5" stroke="#8F8F8F" stroke-opacity="0.37"/><line x1="766" y1="197.5" x2="768" y2="197.5" stroke="#8F8F8F" stroke-opacity="0.37"/><line x1="66" y1="197.5" x2="766" y2="197.5" stroke="#8F8F8F" stroke-opacity="0.37" stroke-dasharray="1 1"/><line x1="64" y1="188.5" x2="66" y2="188.5" stroke="#8F8F8F" stroke-opacity="0.37"/><line x1="766" y1="188.5" x2="768" y2="188.5" stroke="#8F8F8F" stroke-opacity="0.37"/><line x1="66" y1="188.5" x2="766" y2="188.5" stroke="#8F8F8F" stroke-opacity="0.37" stroke-dasharray="1 1"/><line x1="64" y1="169.5" x2="66" y2="169.5" stroke="#8F8F8F" stroke-opacity="0.37"/><line x1="766" y1="169.5" x2="768" y2="169.5" stroke="#8F8F8F" stroke-opacity="0.37"/><line x1="66" y1="169.5" x2="766" y2="169.5" stroke="#8F8F8F" stroke-opacity="0.37" stroke-dasharray="1 1"/><line x1="64" y1="160.5" x2="66" y2="160.5" stroke="#8F8F8F" stroke-opacity="0.37"/><line x1="766" y1="160.5" x2="768" y2="160.5" stroke="#8F8F8F" stroke-opacity="0.37"/><line x1="66" y1="160.5" x2="766" y2="160.5" stroke="#8F8F8F" stroke-opacity="0.37" stroke-dasharray="1 1"/><line x1="64" y1="150.5" x2="66" y2="150.5" stroke="#8F8F8F" stroke-opacity="0.37"/><line x1="766" y1="150.5" x2="768" y2="150.5" stroke="#8F8F8F" stroke-opacity="0.37"/><line x1="66" y1="150.5" x2="766" y2="150.5" stroke="#8F8F8F" stroke-opacity="0.37" stroke-dasharray="1 1"/><line x1="64" y1="141.5" x2="66" y2="141.5" stroke="#8F8F8F" stroke-opacity="0.37"/><line x1="766" y1="141.5" x2="768" y2="141.5" stroke="#8F8F8F" stroke-opacity="0.37"/><line x1="66" y1="141.5" x2="766" y2="141.5" stroke="#8F8F8F" stroke-opacity="0.37" stroke-dasharray="1 1"/><line x1="64" y1="122.5" x2="66" y2="122.5" stroke="#8F8F8F" stroke-opacity="0.37"/><line x1="766" y1="122.5" x2="768" y2="122.5" stroke="#8F8F8F" stroke-opacity="0.37"/><line x1="66" y1="122.5" x2="766" y2="122.5" stroke="#8F8F8F" stroke-opacity="0.37" stroke-dasharray="1 1"/><line x1="64" y1="113.5" x2="66" y2="113.5" stroke="#8F8F8F" stroke-opacity="0.37"/><line x1="766" y1="113.5" x2="768" y2="113.5" stroke="#8F8F8F" stroke-opacity="0.37"/><line x1="66" y1="113.5" x2="766" y2="113.5" stroke="#8F8F8F" stroke-opacity="0.37" stroke-dasharray="1 1"/><line x1="64" y1="104.5" x2="66" y2="104.5" stroke="#8F8F8F" stroke-opacity="0.37"/><line x1="766" y1="104.5" x2="768" y2="104.5" stroke="#8F8F8F" stroke-opacity="0.37"/><line x1="66" y1="104.5" x2="766" y2="104.5" stroke="#8F8F8F" stroke-opacity="0.37" stroke-dasharray="1 1"/><line x1="64" y1="94.5" x2="66" y2="94.5" stroke="#8F8F8F" stroke-opacity="0.37"/><line x1="766" y1="94.5" x2="768" y2="94.5" stroke="#8F8F8F" stroke-opacity="0.37"/><line x1="66" y1="94.5" x2="766" y2="94.5" stroke="#8F8F8F" stroke-opacity="0.37" stroke-dasharray="1 1"/><line x1="64" y1="76.5" x2="66" y2="76.5" stroke="#8F8F8F" stroke-opacity="0.37"/><line x1="766" y1="76.5" x2="768" y2="76.5" stroke="#8F8F8F" stroke-opacity="0.37"/><line x1="66" y1="76.5" x2="766" y2="76.5" stroke="#8F8F8F" stroke-opacity="0.37" stroke-dasharray="1 1"/><line x1="64" y1="66.5" x2="66" y2="66.5" stroke="#8F8F8F" stroke-opacity="0.37"/><line x1="766" y1="66.5" x2="768" y2="66.5" stroke="#8F8F8F" stroke-opacity="0.37"/><line x1="66" y1="66.5" x2="766" y2="66.5" stroke="#8F8F8F" stroke-opacity="0.37" stroke-dasharray="1 1"/><line x1="64" y1="57.5" x2="66" y2="57.5" stroke="#8F8F8F" stroke-opacity="0.37"/><line x1="766" y1="57.5" x2="768" y2="57.5" stroke="#8F8F8F" stroke-opacity="0.37"/><line x1="66" y1="57.5" x2="766" y2="57.5" stroke="#8F8F8F" stroke-opacity="0.37" stroke-dasharray="1 1"/><line x1="64" y1="48.5" x2="66" y2="48.5" stroke="#8F8F8F" stroke-opacity="0.37"/><line x1="766" y1="48.5" x2="768" y2="48.5" stroke="#8F8F8F" stroke-opacity="0.37"/><line x1="66" y1="48.5" x2="766" y2="48.5" stroke="#8F8F8F" stroke-opacity="0.37" stroke-dasharray="1 1"/><line x1="64" y1="29.5" x2="66" y2="29.5" stroke="#8F8F8F" stroke-opacity="0.37"/><line x1="766" y1="29.5" x2="768" y2="29.5" stroke="#8F8F8F" stroke-opacity="0.37"/><line x1="66" y1="29.5" x2="766" y2="29.5" stroke="#8F8F8F" stroke-opacity="0.37" stroke-dasharray="1 1"/><line x1="64" y1="20.5" x2="66" y2="20.5" stroke="#8F8F8F" stroke-opacity="0.37"/><line x1="766" y1="20.5" x2="768" y2="20.5" stroke="#8F8F8F" stroke-opacity="0.37"/><line x1="66" y1="20.5" x2="766" y2="20.5" stroke="#8F8F8F" stroke-opacity="0.37" stroke-dasharray="1 1"/><line x1="71.5" y1="15" x2="71.5" y2="365" stroke="#8F8F8F" stroke-opacity="0.37" stroke-dasharray="1 1"/><line x1="71.5" y1="365" x2="71.5" y2="367" stroke="#8F8F8F" stroke-opacity="0.37"/><line x1="71.5" y1="13" x2="71.5" y2="15" stroke="#8F8F8F" stroke-opacity="0.37"/><line x1="100.5" y1="15" x2="100.5" y2="365" stroke="#8F8F8F" stroke-opacity="0.37" stroke-dasharray="1 1"/><line x1="100.5" y1="365" x2="100.5" y2="367" stroke="#8F8F8F" stroke-opacity="0.37"/><line x1="100.5" y1="13" x2="100.5" y2="15" stroke="#8F8F8F" stroke-opacity="0.37"/><line x1="129.5" y1="15" x2="129.5" y2="365" stroke="#8F8F8F" stroke-opacity="0.37" stroke-dasharray="1 1"/><line x1="129.5" y1="365" x2="129.5" y2="367" stroke="#8F8F8F" stroke-opacity="0.37"/><line x1="129.5" y1="13" x2="129.5" y2="15" stroke="#8F8F8F" stroke-opacity="0.37"/><line x1="158.5" y1="15" x2="158.5" y2="365" stroke="#8F8F8F" stroke-opacity="0.37" stroke-dasharray="1 1"/><line x1="158.5" y1="365" x2="158.5" y2="367" stroke="#8F8F8F" stroke-opacity="0.37"/><line x1="158.5" y1="13" x2="158.5" y2="15" stroke="#8F8F8F" stroke-opacity="0.37"/><line x1="188.5" y1="15" x2="188.5" y2="365" stroke="#8F8F8F" stroke-opacity="0.37" stroke-dasharray="1 1"/><line x1="188.5" y1="365" x2="188.5" y2="367" stroke="#8F8F8F" stroke-opacity="0.37"/><line x1="188.5" y1="13" x2="188.5" y2="15" stroke="#8F8F8F" stroke-opacity="0.37"/><line x1="217.5" y1="15" x2="217.5" y2="365" stroke="#8F8F8F" stroke-opacity="0.37" stroke-dasharray="1 1"/><line x1="217.5" y1="365" x2="217.5" y2="367" stroke="#8F8F8F" stroke-opacity="0.37"/><line x1="217.5" y1="13" x2="217.5" y2="15" stroke="#8F8F8F" stroke-opacity="0.37"/><line x1="246.5" y1="15" x2="246.5" y2="365" stroke="#8F8F8F" stroke-opacity="0.37" stroke-dasharray="1 1"/><line x1="246.5" y1="365" x2="246.5" y2="367" stroke="#8F8F8F" stroke-opacity="0.37"/><line x1="246.5" y1="13" x2="246.5" y2="15" stroke="#8F8F8F" stroke-opacity="0.37"/><line x1="275.5" y1="15" x2="275.5" y2="365" stroke="#8F8F8F" stroke-opacity="0.37" stroke-dasharray="1 1"/><line x1="275.5" y1="365" x2="275.5" y2="367" stroke="#8F8F8F" stroke-opacity="0.37"/><line x1="275.5" y1="13" x2="275.5" y2="15" stroke="#8F8F8F" stroke-opacity="0.37"/><line x1="304.5" y1="15" x2="304.5" y2="365" stroke="#8F8F8F" stroke-opacity="0.37" stroke-dasharray="1 1"/><line x1="304.5" y1="365" x2="304.5" y2="367" stroke="#8F8F8F" stroke-opacity="0.37"/><line x1="304.5" y1="13" x2="304.5" y2="15" stroke="#8F8F8F" stroke-opacity="0.37"/><line x1="333.5" y1="15" x2="333.5" y2="365" stroke="#8F8F8F" stroke-opacity="0.37" stroke-dasharray="1 1"/><line x1="333.5" y1="365" x2="333.5" y2="367" stroke="#8F8F8F" stroke-opacity="0.37"/><line x1="333.5" y1="13" x2="333.5" y2="15" stroke="#8F8F8F" stroke-opacity="0.37"/><line x1="363.5" y1="15" x2="363.5" y2="365" stroke="#8F8F8F" stroke-opacity="0.37" stroke-dasharray="1 1"/><line x1="363.5" y1="365" x2="363.5" y2="367" stroke="#8F8F8F" stroke-opacity="0.37"/><line x1="363.5" y1="13" x2="363.5" y2="15" stroke="#8F8F8F" stroke-opacity="0.37"/><line x1="392.5" y1="15" x2="392.5" y2="365" stroke="#8F8F8F" stroke-opacity="0.37" stroke-dasharray="1 1"/><line x1="392.5" y1="365" x2="392.5" y2="367" stroke="#8F8F8F" stroke-opacity="0.37"/><line x1="392.5" y1="13" x2="392.5" y2="15" stroke="#8F8F8F" stroke-opacity="0.37"/><line x1="421.5" y1="15" x2="421.5" y2="365" stroke="#8F8F8F" stroke-opacity="0.37" stroke-dasharray="1 1"/><line x1="421.5" y1="365" x2="421.5" y2="367" stroke="#8F8F8F" stroke-opacity="0.37"/><line x1="421.5" y1="13" x2="421.5" y2="15" stroke="#8F8F8F" stroke-opacity="0.37"/><line x1="450.5" y1="15" x2="450.5" y2="365" stroke="#8F8F8F" stroke-opacity="0.37" stroke-dasharray="1 1"/><line x1="450.5" y1="365" x2="450.5" y2="367" stroke="#8F8F8F" stroke-opacity="0.37"/><line x1="450.5" y1="13" x2="450.5" y2="15" stroke="#8F8F8F" stroke-opacity="0.37"/><line x1="479.5" y1="15" x2="479.5" y2="365" stroke="#8F8F8F" stroke-opacity="0.37" stroke-dasharray="1 1"/><line x1="479.5" y1="365" x2="479.5" y2="367" stroke="#8F8F8F" stroke-opacity="0.37"/><line x1="479.5" y1="13" x2="479.5" y2="15" stroke="#8F8F8F" stroke-opacity="0.37"/><line x1="508.5" y1="15" x2="508.5" y2="365" stroke="#8F8F8F" stroke-opacity="0.37" stroke-dasharray="1 1"/><line x1="508.5" y1="365" x2="508.5" y2="367" stroke="#8F8F8F" stroke-opacity="0.37"/><line x1="508.5" y1="13" x2="508.5" y2="15" stroke="#8F8F8F" stroke-opacity="0.37"/><line x1="538.5" y1="15" x2="538.5" y2="365" stroke="#8F8F8F" stroke-opacity="0.37" stroke-dasharray="1 1"/><line x1="538.5" y1="365" x2="538.5" y2="367" stroke="#8F8F8F" stroke-opacity="0.37"/><line x1="538.5" y1="13" x2="538.5" y2="15" stroke="#8F8F8F" stroke-opacity="0.37"/><line x1="567.5" y1="15" x2="567.5" y2="365" stroke="#8F8F8F" stroke-opacity="0.37" stroke-dasharray="1 1"/><line x1="567.5" y1="365" x2="567.5" y2="367" stroke="#8F8F8F" stroke-opacity="0.37"/><line x1="567.5" y1="13" x2="567.5" y2="15" stroke="#8F8F8F" stroke-opacity="0.37"/><line x1="596.5" y1="15" x2="596.5" y2="365" stroke="#8F8F8F" stroke-opacity="0.37" stroke-dasharray="1 1"/><line x1="596.5" y1="365" x2="596.5" y2="367" stroke="#8F8F8F" stroke-opacity="0.37"/><line x1="596.5" y1="13" x2="596.5" y2="15" stroke="#8F8F8F" stroke-opacity="0.37"/><line x1="625.5" y1="15" x2="625.5" y2="365" stroke="#8F8F8F" stroke-opacity="0.37" stroke-dasharray="1 1"/><line x1="625.5" y1="365" x2="625.5" y2="367" stroke="#8F8F8F" stroke-opacity="0.37"/><line x1="625.5" y1="13" x2="625.5" y2="15" stroke="#8F8F8F" stroke-opacity="0.37"/><line x1="654.5" y1="15" x2="654.5" y2="365" stroke="#8F8F8F" stroke-opacity="0.37" stroke-dasharray="1 1"/><line x1="654.5" y1="365" x2="654.5" y2="367" stroke="#8F8F8F" stroke-opacity="0.37"/><line x1="654.5" y1="13" x2="654.5" y2="15" stroke="#8F8F8F" stroke-opacity="0.37"/><line x1="683.5" y1="15" x2="683.5" y2="365" stroke="#8F8F8F" stroke-opacity="0.37" stroke-dasharray="1 1"/><line x1="683.5" y1="365" x2="683.5" y2="367" stroke="#8F8F8F" stroke-opacity="0.37"/><line x1="683.5" y1="13" x2="683.5" y2="15" stroke="#8F8F8F" stroke-opacity="0.37"/><line x1="713.5" y1="15" x2="713.5" y2="365" stroke="#8F8F8F" stroke-opacity="0.37" stroke-dasharray="1 1"/><line x1="713.5" y1="365" x2="713.5" y2="367" stroke="#8F8F8F" stroke-opacity="0.37"/><line x1="713.5" y1="13" x2="713.5" y2="15" stroke="#8F8F8F" stroke-opacity="0.37"/><line x1="742.5" y1="15" x2="742.5" y2="365" stroke="#8F8F8F" stroke-opacity="0.37" stroke-dasharray="1 1"/><line x1="742.5" y1="365" x2="742.5" y2="367" stroke="#8F8F8F" stroke-opacity="0.37"/><line x1="742.5" y1="13" x2="742.5" y2="15" stroke="#8F8F8F" stroke-opacity="0.37"/><line x1="64" y1="318.5" x2="66" y2="318.5" stroke="#DE4F4F" stroke-opacity="0.45"/><line x1="766" y1="318.5" x2="768" y2="318.5" stroke="#DE4F4F" stroke-opacity="0.45"/><line x1="67" y1="318.5" x2="766" y2="318.5" stroke="#DE4F4F" stroke-opacity="0.45" stroke-dasharray="1 1"/><line x1="64" y1="272.5" x2="66" y2="272.5" stroke="#DE4F4F" stroke-opacity="0.45"/><line x1="766" y1="272.5" x2="768" y2="272.5" stroke="#DE4F4F" stroke-opacity="0.45"/><line x1="67" y1="272.5" x2="766" y2="272.5" stroke="#DE4F4F" stroke-opacity="0.45" stroke-dasharray="1 1"/><line x1="64" y1="225.5" x2="66" y2="225.5" stroke="#DE4F4F" stroke-opacity="0.45"/><line x1="766" y1="225.5" x2="768" y2="225.5" stroke="#DE4F4F" stroke-opacity="0.45"/><line x1="67" y1="225.5" x2="766" y2="225.5" stroke="#DE4F4F" stroke-opacity="0.45" stroke-dasharray="1 1"/><line x1="64" y1="178.5" x2="66" y2="178.5" stroke="#DE4F4F" stroke-opacity="0.45"/><line x1="766" y1="178.5" x2="768" y2="178.5" stroke="#DE4F4F" stroke-opacity="0.45"/><line x1="67" y1="178.5" x2="766" y2="178.5" stroke="#DE4F4F" stroke-opacity="0.45" stroke-dasharray="1 1"/><line x1="64" y1="132.5" x2="66" y2="132.5" stroke="#DE4F4F" stroke-opacity="0.45"/><line x1="766" y1="132.5" x2="768" y2="132.5" stroke="#DE4F4F" stroke-opacity="0.45"/><line x1="67" y1="132.5" x2="766" y2="132.5" stroke="#DE4F4F" stroke-opacity="0.45" stroke-dasharray="1 1"/><line x1="64" y1="85.5" x2="66" y2="85.5" stroke="#DE4F4F" stroke-opacity="0.45"/><line x1="766" y1="85.5" x2="768" y2="85.5" stroke="#DE4F4F" stroke-opacity="0.45"/><line x1="67" y1="85.5" x2="766" y2="85.5" stroke="#DE4F4F" stroke-opacity="0.45" stroke-dasharray="1 1"/><line x1="64" y1="38.5" x2="66" y2="38.5" stroke="#DE4F4F" stroke-opacity="0.45"/><line x1="766" y1="38.5" x2="768" y2="38.5" stroke="#DE4F4F" stroke-opacity="0.45"/><line x1="67" y1="38.5" x2="766" y2="38.5" stroke="#DE4F4F" stroke-opacity="0.45" stroke-dasharray="1 1"/><line x1="85.5" y1="15" x2="85.5" y2="365" stroke="#DE4F4F" stroke-opacity="0.45" stroke-dasharray="1 1"/><line x1="85.5" y1="365" x2="85.5" y2="367" stroke="#DE4F4F" stroke-opacity="0.45"/><line x1="85.5" y1="13" x2="85.5" y2="15" stroke="#DE4F4F" stroke-opacity="0.45"/><line x1="115.5" y1="15" x2="115.5" y2="365" stroke="#DE4F4F" stroke-opacity="0.45" stroke-dasharray="1 1"/><line x1="115.5" y1="365" x2="115.5" y2="367" stroke="#DE4F4F" stroke-opacity="0.45"/><line x1="115.5" y1="13" x2="115.5" y2="15" stroke="#DE4F4F" stroke-opacity="0.45"/><line x1="144.5" y1="15" x2="144.5" y2="365" stroke="#DE4F4F" stroke-opacity="0.45" stroke-dasharray="1 1"/><line x1="144.5" y1="365" x2="144.5" y2="367" stroke="#DE4F4F" stroke-opacity="0.45"/><line x1="144.5" y1="13" x2="144.5" y2="15" stroke="#DE4F4F" stroke-opacity="0.45"/><line x1="173.5" y1="15" x2="173.5" y2="365" stroke="#DE4F4F" stroke-opacity="0.45" stroke-dasharray="1 1"/><line x1="173.5" y1="365" x2="173.5" y2="367" stroke="#DE4F4F" stroke-opacity="0.45"/><line x1="173.5" y1="13" x2="173.5" y2="15" stroke="#DE4F4F" stroke-opacity="0.45"/><line x1="202.5" y1="15" x2="202.5" y2="365" stroke="#DE4F4F" stroke-opacity="0.45" stroke-dasharray="1 1"/><line x1="202.5" y1="365" x2="202.5" y2="367" stroke="#DE4F4F" stroke-opacity="0.45"/><line x1="202.5" y1="13" x2="202.5" y2="15" stroke="#DE4F4F" stroke-opacity="0.45"/><line x1="231.5" y1="15" x2="231.5" y2="365" stroke="#DE4F4F" stroke-opacity="0.45" stroke-dasharray="1 1"/><line x1="231.5" y1="365" x2="231.5" y2="367" stroke="#DE4F4F" stroke-opacity="0.45"/><line x1="231.5" y1="13" x2="231.5" y2="15" stroke="#DE4F4F" stroke-opacity="0.45"/><line x1="260.5" y1="15" x2="260.5" y2="365" stroke="#DE4F4F" stroke-opacity="0.45" stroke-dasharray="1 1"/><line x1="260.5" y1="365" x2="260.5" y2="367" stroke="#DE4F4F" stroke-opacity="0.45"/><line x1="260.5" y1="13" x2="260.5" y2="15" stroke="#DE4F4F" stroke-opacity="0.45"/><line x1="290.5" y1="15" x2="290.5" y2="365" stroke="#DE4F4F" stroke-opacity="0.45" stroke-dasharray="1 1"/><line x1="290.5" y1="365" x2="290.5" y2="367" stroke="#DE4F4F" stroke-opacity="0.45"/><line x1="290.5" y1="13" x2="290.5" y2="15" stroke="#DE4F4F" stroke-opacity="0.45"/><line x1="319.5" y1="15" x2="319.5" y2="365" stroke="#DE4F4F" stroke-opacity="0.45" stroke-dasharray="1 1"/><line x1="319.5" y1="365" x2="319.5" y2="367" stroke="#DE4F4F" stroke-opacity="0.45"/><line x1="319.5" y1="13" x2="319.5" y2="15" stroke="#DE4F4F" stroke-opacity="0.45"/><line x1="348.5" y1="15" x2="348.5" y2="365" stroke="#DE4F4F" stroke-opacity="0.45" stroke-dasharray="1 1"/><line x1="348.5" y1="365" x2="348.5" y2="367" stroke="#DE4F4F" stroke-opacity="0.45"/><line x1="348.5" y1="13" x2="348.5" y2="15" stroke="#DE4F4F" stroke-opacity="0.45"/><line x1="377.5" y1="15" x2="377.5" y2="365" stroke="#DE4F4F" stroke-opacity="0.45" stroke-dasharray="1 1"/><line x1="377.5" y1="365" x2="377.5" y2="367" stroke="#DE4F4F" stroke-opacity="0.45"/><line x1="377.5" y1="13" x2="377.5" y2="15" stroke="#DE4F4F" stroke-opacity="0.45"/><line x1="406.5" y1="15" x2="406.5" y2="365" stroke="#DE4F4F" stroke-opacity="0.45" stroke-dasharray="1 1"/><line x1="406.5" y1="365" x2="406.5" y2="367" stroke="#DE4F4F" stroke-opacity="0.45"/><line x1="406.5" y1="13" x2="406.5" y2="15" stroke="#DE4F4F" stroke-opacity="0.45"/><line x1="435.5" y1="15" x2="435.5" y2="365" stroke="#DE4F4F" stroke-opacity="0.45" stroke-dasharray="1 1"/><line x1="435.5" y1="365" x2="435.5" y2="367" stroke="#DE4F4F" stroke-opacity="0.45"/><line x1="435.5" y1="13" x2="435.5" y2="15" stroke="#DE4F4F" stroke-opacity="0.45"/><line x1="465.5" y1="15" x2="465.5" y2="365" stroke="#DE4F4F" stroke-opacity="0.45" stroke-dasharray="1 1"/><line x1="465.5" y1="365" x2="465.5" y2="367" stroke="#DE4F4F" stroke-opacity="0.45"/><line x1="465.5" y1="13" x2="465.5" y2="15" stroke="#DE4F4F" stroke-opacity="0.45"/><line x1="494.5" y1="15" x2="494.5" y2="365" stroke="#DE4F4F" stroke-opacity="0.45" stroke-dasharray="1 1"/><line x1="494.5" y1="365" x2="494.5" y2="367" stroke="#DE4F4F" stroke-opacity="0.45"/><line x1="494.5" y1="13" x2="494.5" y2="15" stroke="#DE4F4F" stroke-opacity="0.45"/><line x1="523.5" y1="15" x2="523.5" y2="365" stroke="#DE4F4F" stroke-opacity="0.45" stroke-dasharray="1 1"/><line x1="523.5" y1="365" x2="523.5" y2="367" stroke="#DE4F4F" stroke-opacity="0.45"/><line x1="523.5" y1="13" x2="523.5" y2="15" stroke="#DE4F4F" stroke-opacity="0.45"/><line x1="552.5" y1="15" x2="552.5" y2="365" stroke="#DE4F4F" stroke-opacity="0.45" stroke-dasharray="1 1"/><line x1="552.5" y1="365" x2="552.5" y2="367" stroke="#DE4F4F" stroke-opacity="0.45"/><line x1="552.5" y1="13" x2="552.5" y2="15" stroke="#DE4F4F" stroke-opacity="0.45"/><line x1="581.5" y1="15" x2="581.5" y2="365" stroke="#DE4F4F" stroke-opacity="0.45" stroke-dasharray="1 1"/><line x1="581.5" y1="365" x2="581.5" y2="367" stroke="#DE4F4F" stroke-opacity="0.45"/><line x1="581.5" y1="13" x2="581.5" y2="15" stroke="#DE4F4F" stroke-opacity="0.45"/><line x1="610.5" y1="15" x2="610.5" y2="365" stroke="#DE4F4F" stroke-opacity="0.45" stroke-dasharray="1 1"/><line x1="610.5" y1="365" x2="610.5" y2="367" stroke="#DE4F4F" stroke-opacity="0.45"/><line x1="610.5" y1="13" x2="610.5" y2="15" stroke="#DE4F4F" stroke-opacity="0.45"/><line x1="640.5" y1="15" x2="640.5" y2="365" stroke="#DE4F4F" stroke-opacity="0.45" stroke-dasharray="1 1"/><line x1="640.5" y1="365" x2="640.5" y2="367" stroke="#DE4F4F" stroke-opacity="0.45"/><line x1="640.5" y1="13" x2="640.5" y2="15" stroke="#DE4F4F" stroke-opacity="0.45"/><line x1="669.5" y1="15" x2="669.5" y2="365" stroke="#DE4F4F" stroke-opacity="0.45" stroke-dasharray="1 1"/><line x1="669.5" y1="365" x2="669.5" y2="367" stroke="#DE4F4F" stroke-opacity="0.45"/><line x1="669.5" y1="13" x2="669.5" y2="15" stroke="#DE4F4F" stroke-opacity="0.45"/><line x1="698.5" y1="15" x2="698.5" y2="365" stroke="#DE4F4F" stroke-opacity="0.45" stroke-dasharray="1 1"/><line x1="698.5" y1="365" x2="698.5" y2="367" stroke="#DE4F4F" stroke-opacity="0.45"/><line x1="698.5" y1="13" x2="698.5" y2="15" stroke="#DE4F4F" stroke-opacity="0.45"/><line x1="727.5" y1="15" x2="727.5" y2="365" stroke="#DE4F4F" stroke-opacity="0.45" stroke-dasharray="1 1"/><line x1="727.5" y1="365" x2="727.5" y2="367" stroke="#DE4F4F" stroke-opacity="0.45"/><line x1="727.5" y1="13" x2="727.5" y2="15" stroke="#DE4F4F" stroke-opacity="0.45"/><line x1="756.5" y1="15" x2="756.5" y2="365" stroke="#DE4F4F" stroke-opacity="0.45" stroke-dasharray="1 1"/><line x1="756.5" y1="365" x2="756.5" y2="367" stroke="#DE4F4F" stroke-opacity="0.45"/><line x1="756.5" y1="13" x2="756.5" y2="15" stroke="#DE4F4F" stroke-opacity="0.45"/></g>
<g shape-rendering="crispEdges">
<line x1="62" y1="365.5" x2="66" y2="365.5" stroke="#606060"/>
<line x1="66" y1="365.5" x2="766" y2="365.5" stroke="#262626"/>
<line x1="766" y1="365.5" x2="770" y2="365.5" stroke="#606060"/>
<line x1="67" y1="365.5" x2="769" y2="365.5" stroke="#DE4F4F" stroke-opacity="0.45" stroke-dasharray="1 1"/>
<line x1="66.5" y1="369" x2="66.5" y2="11" stroke="#606060"/>
</g>
<polygon points="769,362 773.6,365 769,368" fill="#801F1F"/>
<polygon points="63.9,13 66.8,8 69.9,13" fill="#801F1F"/>
<text x="60.2" y="369" text-anchor="end" font-family="&apos;Liberation Mono&apos;, monospace" font-size="10.3" fill="#000000" stroke="#000000" stroke-width="0.25">0</text>
<text x="60.2" y="322" text-anchor="end" font-family="&apos;Liberation Mono&apos;, monospace" font-size="10.3" fill="#000000" stroke="#000000" stroke-width="0.25">10</text>
<text x="60.2" y="276" text-anchor="end" font-family="&apos;Liberation Mono&apos;, monospace" font-size="10.3" fill="#000000" stroke="#000000" stroke-width="0.25">20</text>
<text x="60.2" y="229" text-anchor="end" font-family="&apos;Liberation Mono&apos;, monospace" font-size="10.3" fill="#000000" stroke="#000000" stroke-width="0.25">30</text>
<text x="60.2" y="182" text-anchor="end" font-family="&apos;Liberation Mono&apos;, monospace" font-size="10.3" fill="#000000" stroke="#000000" stroke-width="0.25">40</text>
<text x="60.2" y="136" text-anchor="end" font-family="&apos;Liberation Mono&apos;, monospace" font-size="10.3" fill="#000000" stroke="#000000" stroke-width="0.25">50</text>
<text x="60.2" y="89" text-anchor="end" font-family="&apos;Liberation Mono&apos;, monospace" font-size="10.3" fill="#000000" stroke="#000000" stroke-width="0.25">60</text>
<text x="60.2" y="42" text-anchor="end" font-family="&apos;Liberation Mono&apos;, monospace" font-size="10.3" fill="#000000" stroke="#000000" stroke-width="0.25">70</text>
<text x="145.1" y="377" text-anchor="middle" xml:space="preserve" font-family="&apos;Liberation Mono&apos;, monospace" font-size="10.3" fill="#000000" stroke="#000000" stroke-width="0.25">Do 09:00</text>
<text x="232.6" y="377" text-anchor="middle" xml:space="preserve" font-family="&apos;Liberation Mono&apos;, monospace" font-size="10.3" fill="#000000" stroke="#000000" stroke-width="0.25">Do 12:00</text>
<text x="320.1" y="377" text-anchor="middle" xml:space="preserve" font-family="&apos;Liberation Mono&apos;, monospace" font-size="10.3" fill="#000000" stroke="#000000" stroke-width="0.25">Do 15:00</text>
<text x="407.6" y="377" text-anchor="middle" xml:space="preserve" font-family="&apos;Liberation Mono&apos;, monospace" font-size="10.3" fill="#000000" stroke="#000000" stroke-width="0.25">Do 18:00</text>
<text x="495.1" y="377" text-anchor="middle" xml:space="preserve" font-family="&apos;Liberation Mono&apos;, monospace" font-size="10.3" fill="#000000" stroke="#000000" stroke-width="0.25">Do 21:00</text>
<text x="582.6" y="377" text-anchor="middle" xml:space="preserve" font-family="&apos;Liberation Mono&apos;, monospace" font-size="10.3" fill="#000000" stroke="#000000" stroke-width="0.25">Fr 00:00</text>
<text x="670.1" y="377" text-anchor="middle" xml:space="preserve" font-family="&apos;Liberation Mono&apos;, monospace" font-size="10.3" fill="#000000" stroke="#000000" stroke-width="0.25">Fr 03:00</text>
<text x="757.6" y="377" text-anchor="middle" xml:space="preserve" font-family="&apos;Liberation Mono&apos;, monospace" font-size="10.3" fill="#000000" stroke="#000000" stroke-width="0.25">Fr 06:00</text>
<text x="0" y="0" transform="translate(13,191) rotate(-90)" text-anchor="middle" font-family="&apos;Liberation Mono&apos;, monospace" font-size="11.74" fill="#000000" stroke="#000000" stroke-width="0.15">Temperatur (°C)</text>
<text x="0" y="0" transform="translate(786,5.5) rotate(90)" font-family="&apos;Liberation Mono&apos;, monospace" font-size="8.4" fill="#9A9A9A">RRDTOOL / TOBI OETIKER</text>
<rect x="15.5" y="386.5" width="8" height="9" fill="#00A0A0" stroke="#000000" stroke-width="1" shape-rendering="crispEdges"/>
<text transform="translate(30.10,395) scale(1,1.02)" x="0" y="0" xml:space="preserve" font-family="&apos;Liberation Mono&apos;, monospace" font-size="11.74" fill="#000000" stroke="#000000" stroke-width="0.15">Speicher  0</text>
<text transform="translate(137.66,395) scale(1,1.02)" x="0" y="0" xml:space="preserve" font-family="&apos;Liberation Mono&apos;, monospace" font-size="11.74" fill="#000000" stroke="#000000" stroke-width="0.15">min:</text>
<text transform="translate(200.56,395) scale(1,1.02)" x="0" y="0" xml:space="preserve" font-family="&apos;Liberation Mono&apos;, monospace" font-size="11.74" fill="#000000" stroke="#000000" stroke-width="0.15">20.75</text>
<text transform="translate(257.01,395) scale(1,1.02)" x="0" y="0" xml:space="preserve" font-family="&apos;Liberation Mono&apos;, monospace" font-size="11.74" fill="#000000" stroke="#000000" stroke-width="0.15">max:</text>
<text transform="translate(319.80,395) scale(1,1.02)" x="0" y="0" xml:space="preserve" font-family="&apos;Liberation Mono&apos;, monospace" font-size="11.74" fill="#000000" stroke="#000000" stroke-width="0.15">21.19</text>
<text transform="translate(374.26,395) scale(1,1.02)" x="0" y="0" xml:space="preserve" font-family="&apos;Liberation Mono&apos;, monospace" font-size="11.74" fill="#000000" stroke="#000000" stroke-width="0.15">last:</text>
<text transform="translate(445.70,395) scale(1,1.02)" x="0" y="0" xml:space="preserve" font-family="&apos;Liberation Mono&apos;, monospace" font-size="11.74" fill="#000000" stroke="#000000" stroke-width="0.15">20.94</text>
<rect x="15.5" y="400.5" width="8" height="9" fill="#0000A0" stroke="#000000" stroke-width="1" shape-rendering="crispEdges"/>
<text transform="translate(30.10,409) scale(1,1.02)" x="0" y="0" xml:space="preserve" font-family="&apos;Liberation Mono&apos;, monospace" font-size="11.74" fill="#000000" stroke="#000000" stroke-width="0.15">Speicher  1</text>
<text transform="translate(137.66,409) scale(1,1.02)" x="0" y="0" xml:space="preserve" font-family="&apos;Liberation Mono&apos;, monospace" font-size="11.74" fill="#000000" stroke="#000000" stroke-width="0.15">min:</text>
<text transform="translate(200.56,409) scale(1,1.02)" x="0" y="0" xml:space="preserve" font-family="&apos;Liberation Mono&apos;, monospace" font-size="11.74" fill="#000000" stroke="#000000" stroke-width="0.15">20.75</text>
<text transform="translate(257.01,409) scale(1,1.02)" x="0" y="0" xml:space="preserve" font-family="&apos;Liberation Mono&apos;, monospace" font-size="11.74" fill="#000000" stroke="#000000" stroke-width="0.15">max:</text>
<text transform="translate(319.80,409) scale(1,1.02)" x="0" y="0" xml:space="preserve" font-family="&apos;Liberation Mono&apos;, monospace" font-size="11.74" fill="#000000" stroke="#000000" stroke-width="0.15">22.13</text>
<text transform="translate(374.26,409) scale(1,1.02)" x="0" y="0" xml:space="preserve" font-family="&apos;Liberation Mono&apos;, monospace" font-size="11.74" fill="#000000" stroke="#000000" stroke-width="0.15">last:</text>
<text transform="translate(445.70,409) scale(1,1.02)" x="0" y="0" xml:space="preserve" font-family="&apos;Liberation Mono&apos;, monospace" font-size="11.74" fill="#000000" stroke="#000000" stroke-width="0.15">21.85</text>
<rect x="15.5" y="414.5" width="8" height="9" fill="#00A000" stroke="#000000" stroke-width="1" shape-rendering="crispEdges"/>
<text transform="translate(30.10,423) scale(1,1.02)" x="0" y="0" xml:space="preserve" font-family="&apos;Liberation Mono&apos;, monospace" font-size="11.74" fill="#000000" stroke="#000000" stroke-width="0.15">Speicher  2</text>
<text transform="translate(137.66,423) scale(1,1.02)" x="0" y="0" xml:space="preserve" font-family="&apos;Liberation Mono&apos;, monospace" font-size="11.74" fill="#000000" stroke="#000000" stroke-width="0.15">min:</text>
<text transform="translate(200.56,423) scale(1,1.02)" x="0" y="0" xml:space="preserve" font-family="&apos;Liberation Mono&apos;, monospace" font-size="11.74" fill="#000000" stroke="#000000" stroke-width="0.15">20.75</text>
<text transform="translate(257.01,423) scale(1,1.02)" x="0" y="0" xml:space="preserve" font-family="&apos;Liberation Mono&apos;, monospace" font-size="11.74" fill="#000000" stroke="#000000" stroke-width="0.15">max:</text>
<text transform="translate(319.80,423) scale(1,1.02)" x="0" y="0" xml:space="preserve" font-family="&apos;Liberation Mono&apos;, monospace" font-size="11.74" fill="#000000" stroke="#000000" stroke-width="0.15">22.75</text>
<text transform="translate(374.26,423) scale(1,1.02)" x="0" y="0" xml:space="preserve" font-family="&apos;Liberation Mono&apos;, monospace" font-size="11.74" fill="#000000" stroke="#000000" stroke-width="0.15">last:</text>
<text transform="translate(445.70,423) scale(1,1.02)" x="0" y="0" xml:space="preserve" font-family="&apos;Liberation Mono&apos;, monospace" font-size="11.74" fill="#000000" stroke="#000000" stroke-width="0.15">22.00</text>
<rect x="15.5" y="428.5" width="8" height="9" fill="#A00000" stroke="#000000" stroke-width="1" shape-rendering="crispEdges"/>
<text transform="translate(30.10,437) scale(1,1.02)" x="0" y="0" xml:space="preserve" font-family="&apos;Liberation Mono&apos;, monospace" font-size="11.74" fill="#000000" stroke="#000000" stroke-width="0.15">Speicher  3</text>
<text transform="translate(137.66,437) scale(1,1.02)" x="0" y="0" xml:space="preserve" font-family="&apos;Liberation Mono&apos;, monospace" font-size="11.74" fill="#000000" stroke="#000000" stroke-width="0.15">min:</text>
<text transform="translate(200.56,437) scale(1,1.02)" x="0" y="0" xml:space="preserve" font-family="&apos;Liberation Mono&apos;, monospace" font-size="11.74" fill="#000000" stroke="#000000" stroke-width="0.15">20.75</text>
<text transform="translate(257.01,437) scale(1,1.02)" x="0" y="0" xml:space="preserve" font-family="&apos;Liberation Mono&apos;, monospace" font-size="11.74" fill="#000000" stroke="#000000" stroke-width="0.15">max:</text>
<text transform="translate(319.80,437) scale(1,1.02)" x="0" y="0" xml:space="preserve" font-family="&apos;Liberation Mono&apos;, monospace" font-size="11.74" fill="#000000" stroke="#000000" stroke-width="0.15">23.13</text>
<text transform="translate(374.26,437) scale(1,1.02)" x="0" y="0" xml:space="preserve" font-family="&apos;Liberation Mono&apos;, monospace" font-size="11.74" fill="#000000" stroke="#000000" stroke-width="0.15">last:</text>
<text transform="translate(445.70,437) scale(1,1.02)" x="0" y="0" xml:space="preserve" font-family="&apos;Liberation Mono&apos;, monospace" font-size="11.74" fill="#000000" stroke="#000000" stroke-width="0.15">22.75</text>
<rect x="15.5" y="442.5" width="8" height="9" fill="#000000" stroke="#000000" stroke-width="1" shape-rendering="crispEdges"/>
<text transform="translate(30.10,451) scale(1,1.02)" x="0" y="0" xml:space="preserve" font-family="&apos;Liberation Mono&apos;, monospace" font-size="11.74" fill="#000000" stroke="#000000" stroke-width="0.15">Speicher  4</text>
<text transform="translate(137.66,451) scale(1,1.02)" x="0" y="0" xml:space="preserve" font-family="&apos;Liberation Mono&apos;, monospace" font-size="11.74" fill="#000000" stroke="#000000" stroke-width="0.15">min:</text>
<text transform="translate(200.56,451) scale(1,1.02)" x="0" y="0" xml:space="preserve" font-family="&apos;Liberation Mono&apos;, monospace" font-size="11.74" fill="#000000" stroke="#000000" stroke-width="0.15">20.75</text>
<text transform="translate(257.01,451) scale(1,1.02)" x="0" y="0" xml:space="preserve" font-family="&apos;Liberation Mono&apos;, monospace" font-size="11.74" fill="#000000" stroke="#000000" stroke-width="0.15">max:</text>
<text transform="translate(319.80,451) scale(1,1.02)" x="0" y="0" xml:space="preserve" font-family="&apos;Liberation Mono&apos;, monospace" font-size="11.74" fill="#000000" stroke="#000000" stroke-width="0.15">32.14</text>
<text transform="translate(374.26,451) scale(1,1.02)" x="0" y="0" xml:space="preserve" font-family="&apos;Liberation Mono&apos;, monospace" font-size="11.74" fill="#000000" stroke="#000000" stroke-width="0.15">last:</text>
<text transform="translate(445.70,451) scale(1,1.02)" x="0" y="0" xml:space="preserve" font-family="&apos;Liberation Mono&apos;, monospace" font-size="11.74" fill="#000000" stroke="#000000" stroke-width="0.15">23.12</text>
<rect x="15.5" y="456.5" width="8" height="9" fill="#FFFF00" stroke="#000000" stroke-width="1" shape-rendering="crispEdges"/>
<text transform="translate(30.10,465) scale(1,1.02)" x="0" y="0" xml:space="preserve" font-family="&apos;Liberation Mono&apos;, monospace" font-size="11.74" fill="#000000" stroke="#000000" stroke-width="0.15">Speicher  5</text>
<text transform="translate(137.66,465) scale(1,1.02)" x="0" y="0" xml:space="preserve" font-family="&apos;Liberation Mono&apos;, monospace" font-size="11.74" fill="#000000" stroke="#000000" stroke-width="0.15">min:</text>
<text transform="translate(200.56,465) scale(1,1.02)" x="0" y="0" xml:space="preserve" font-family="&apos;Liberation Mono&apos;, monospace" font-size="11.74" fill="#000000" stroke="#000000" stroke-width="0.15">20.75</text>
<text transform="translate(257.01,465) scale(1,1.02)" x="0" y="0" xml:space="preserve" font-family="&apos;Liberation Mono&apos;, monospace" font-size="11.74" fill="#000000" stroke="#000000" stroke-width="0.15">max:</text>
<text transform="translate(319.80,465) scale(1,1.02)" x="0" y="0" xml:space="preserve" font-family="&apos;Liberation Mono&apos;, monospace" font-size="11.74" fill="#000000" stroke="#000000" stroke-width="0.15">54.13</text>
<text transform="translate(374.26,465) scale(1,1.02)" x="0" y="0" xml:space="preserve" font-family="&apos;Liberation Mono&apos;, monospace" font-size="11.74" fill="#000000" stroke="#000000" stroke-width="0.15">last:</text>
<text transform="translate(445.70,465) scale(1,1.02)" x="0" y="0" xml:space="preserve" font-family="&apos;Liberation Mono&apos;, monospace" font-size="11.74" fill="#000000" stroke="#000000" stroke-width="0.15">23.88</text>
<rect x="15.5" y="470.5" width="8" height="9" fill="#FF00FF" stroke="#000000" stroke-width="1" shape-rendering="crispEdges"/>
<text transform="translate(30.10,479) scale(1,1.02)" x="0" y="0" xml:space="preserve" font-family="&apos;Liberation Mono&apos;, monospace" font-size="11.74" fill="#000000" stroke="#000000" stroke-width="0.15">Speicher  6</text>
<text transform="translate(137.66,479) scale(1,1.02)" x="0" y="0" xml:space="preserve" font-family="&apos;Liberation Mono&apos;, monospace" font-size="11.74" fill="#000000" stroke="#000000" stroke-width="0.15">min:</text>
<text transform="translate(200.56,479) scale(1,1.02)" x="0" y="0" xml:space="preserve" font-family="&apos;Liberation Mono&apos;, monospace" font-size="11.74" fill="#000000" stroke="#000000" stroke-width="0.15">20.75</text>
<text transform="translate(257.01,479) scale(1,1.02)" x="0" y="0" xml:space="preserve" font-family="&apos;Liberation Mono&apos;, monospace" font-size="11.74" fill="#000000" stroke="#000000" stroke-width="0.15">max:</text>
<text transform="translate(319.80,479) scale(1,1.02)" x="0" y="0" xml:space="preserve" font-family="&apos;Liberation Mono&apos;, monospace" font-size="11.74" fill="#000000" stroke="#000000" stroke-width="0.15">66.06</text>
<text transform="translate(374.26,479) scale(1,1.02)" x="0" y="0" xml:space="preserve" font-family="&apos;Liberation Mono&apos;, monospace" font-size="11.74" fill="#000000" stroke="#000000" stroke-width="0.15">last:</text>
<text transform="translate(445.70,479) scale(1,1.02)" x="0" y="0" xml:space="preserve" font-family="&apos;Liberation Mono&apos;, monospace" font-size="11.74" fill="#000000" stroke="#000000" stroke-width="0.15">27.01</text>
<rect x="15.5" y="484.5" width="8" height="9" fill="#00FFFF" stroke="#000000" stroke-width="1" shape-rendering="crispEdges"/>
<text transform="translate(30.10,493) scale(1,1.02)" x="0" y="0" xml:space="preserve" font-family="&apos;Liberation Mono&apos;, monospace" font-size="11.74" fill="#000000" stroke="#000000" stroke-width="0.15">Speicher  7</text>
<text transform="translate(137.66,493) scale(1,1.02)" x="0" y="0" xml:space="preserve" font-family="&apos;Liberation Mono&apos;, monospace" font-size="11.74" fill="#000000" stroke="#000000" stroke-width="0.15">min:</text>
<text transform="translate(200.56,493) scale(1,1.02)" x="0" y="0" xml:space="preserve" font-family="&apos;Liberation Mono&apos;, monospace" font-size="11.74" fill="#000000" stroke="#000000" stroke-width="0.15">20.88</text>
<text transform="translate(257.01,493) scale(1,1.02)" x="0" y="0" xml:space="preserve" font-family="&apos;Liberation Mono&apos;, monospace" font-size="11.74" fill="#000000" stroke="#000000" stroke-width="0.15">max:</text>
<text transform="translate(319.80,493) scale(1,1.02)" x="0" y="0" xml:space="preserve" font-family="&apos;Liberation Mono&apos;, monospace" font-size="11.74" fill="#000000" stroke="#000000" stroke-width="0.15">70.13</text>
<text transform="translate(374.26,493) scale(1,1.02)" x="0" y="0" xml:space="preserve" font-family="&apos;Liberation Mono&apos;, monospace" font-size="11.74" fill="#000000" stroke="#000000" stroke-width="0.15">last:</text>
<text transform="translate(445.70,493) scale(1,1.02)" x="0" y="0" xml:space="preserve" font-family="&apos;Liberation Mono&apos;, monospace" font-size="11.74" fill="#000000" stroke="#000000" stroke-width="0.15">37.94</text>
<rect x="15.5" y="498.5" width="8" height="9" fill="#0000FF" stroke="#000000" stroke-width="1" shape-rendering="crispEdges"/>
<text transform="translate(30.10,507) scale(1,1.02)" x="0" y="0" xml:space="preserve" font-family="&apos;Liberation Mono&apos;, monospace" font-size="11.74" fill="#000000" stroke="#000000" stroke-width="0.15">Speicher  8</text>
<text transform="translate(137.66,507) scale(1,1.02)" x="0" y="0" xml:space="preserve" font-family="&apos;Liberation Mono&apos;, monospace" font-size="11.74" fill="#000000" stroke="#000000" stroke-width="0.15">min:</text>
<text transform="translate(200.56,507) scale(1,1.02)" x="0" y="0" xml:space="preserve" font-family="&apos;Liberation Mono&apos;, monospace" font-size="11.74" fill="#000000" stroke="#000000" stroke-width="0.15">31.06</text>
<text transform="translate(257.01,507) scale(1,1.02)" x="0" y="0" xml:space="preserve" font-family="&apos;Liberation Mono&apos;, monospace" font-size="11.74" fill="#000000" stroke="#000000" stroke-width="0.15">max:</text>
<text transform="translate(319.80,507) scale(1,1.02)" x="0" y="0" xml:space="preserve" font-family="&apos;Liberation Mono&apos;, monospace" font-size="11.74" fill="#000000" stroke="#000000" stroke-width="0.15">72.19</text>
<text transform="translate(374.26,507) scale(1,1.02)" x="0" y="0" xml:space="preserve" font-family="&apos;Liberation Mono&apos;, monospace" font-size="11.74" fill="#000000" stroke="#000000" stroke-width="0.15">last:</text>
<text transform="translate(445.70,507) scale(1,1.02)" x="0" y="0" xml:space="preserve" font-family="&apos;Liberation Mono&apos;, monospace" font-size="11.74" fill="#000000" stroke="#000000" stroke-width="0.15">65.11</text>
<rect x="15.5" y="512.5" width="8" height="9" fill="#00FF00" stroke="#000000" stroke-width="1" shape-rendering="crispEdges"/>
<text transform="translate(30.10,521) scale(1,1.02)" x="0" y="0" xml:space="preserve" font-family="&apos;Liberation Mono&apos;, monospace" font-size="11.74" fill="#000000" stroke="#000000" stroke-width="0.15">Speicher  9</text>
<text transform="translate(137.66,521) scale(1,1.02)" x="0" y="0" xml:space="preserve" font-family="&apos;Liberation Mono&apos;, monospace" font-size="11.74" fill="#000000" stroke="#000000" stroke-width="0.15">min:</text>
<text transform="translate(200.56,521) scale(1,1.02)" x="0" y="0" xml:space="preserve" font-family="&apos;Liberation Mono&apos;, monospace" font-size="11.74" fill="#000000" stroke="#000000" stroke-width="0.15">52.07</text>
<text transform="translate(257.01,521) scale(1,1.02)" x="0" y="0" xml:space="preserve" font-family="&apos;Liberation Mono&apos;, monospace" font-size="11.74" fill="#000000" stroke="#000000" stroke-width="0.15">max:</text>
<text transform="translate(319.80,521) scale(1,1.02)" x="0" y="0" xml:space="preserve" font-family="&apos;Liberation Mono&apos;, monospace" font-size="11.74" fill="#000000" stroke="#000000" stroke-width="0.15">72.13</text>
<text transform="translate(374.26,521) scale(1,1.02)" x="0" y="0" xml:space="preserve" font-family="&apos;Liberation Mono&apos;, monospace" font-size="11.74" fill="#000000" stroke="#000000" stroke-width="0.15">last:</text>
<text transform="translate(445.70,521) scale(1,1.02)" x="0" y="0" xml:space="preserve" font-family="&apos;Liberation Mono&apos;, monospace" font-size="11.74" fill="#000000" stroke="#000000" stroke-width="0.15">70.58</text>
<rect x="15.5" y="526.5" width="8" height="9" fill="#FF0000" stroke="#000000" stroke-width="1" shape-rendering="crispEdges"/>
<text transform="translate(30.10,535) scale(1,1.02)" x="0" y="0" xml:space="preserve" font-family="&apos;Liberation Mono&apos;, monospace" font-size="11.74" fill="#000000" stroke="#000000" stroke-width="0.15">Speicher 10</text>
<text transform="translate(137.66,535) scale(1,1.02)" x="0" y="0" xml:space="preserve" font-family="&apos;Liberation Mono&apos;, monospace" font-size="11.74" fill="#000000" stroke="#000000" stroke-width="0.15">min:</text>
<text transform="translate(200.56,535) scale(1,1.02)" x="0" y="0" xml:space="preserve" font-family="&apos;Liberation Mono&apos;, monospace" font-size="11.74" fill="#000000" stroke="#000000" stroke-width="0.15">54.79</text>
<text transform="translate(257.01,535) scale(1,1.02)" x="0" y="0" xml:space="preserve" font-family="&apos;Liberation Mono&apos;, monospace" font-size="11.74" fill="#000000" stroke="#000000" stroke-width="0.15">max:</text>
<text transform="translate(319.80,535) scale(1,1.02)" x="0" y="0" xml:space="preserve" font-family="&apos;Liberation Mono&apos;, monospace" font-size="11.74" fill="#000000" stroke="#000000" stroke-width="0.15">69.79</text>
<text transform="translate(374.26,535) scale(1,1.02)" x="0" y="0" xml:space="preserve" font-family="&apos;Liberation Mono&apos;, monospace" font-size="11.74" fill="#000000" stroke="#000000" stroke-width="0.15">last:</text>
<text transform="translate(445.70,535) scale(1,1.02)" x="0" y="0" xml:space="preserve" font-family="&apos;Liberation Mono&apos;, monospace" font-size="11.74" fill="#000000" stroke="#000000" stroke-width="0.15">67.94</text>
</svg></body></html>
